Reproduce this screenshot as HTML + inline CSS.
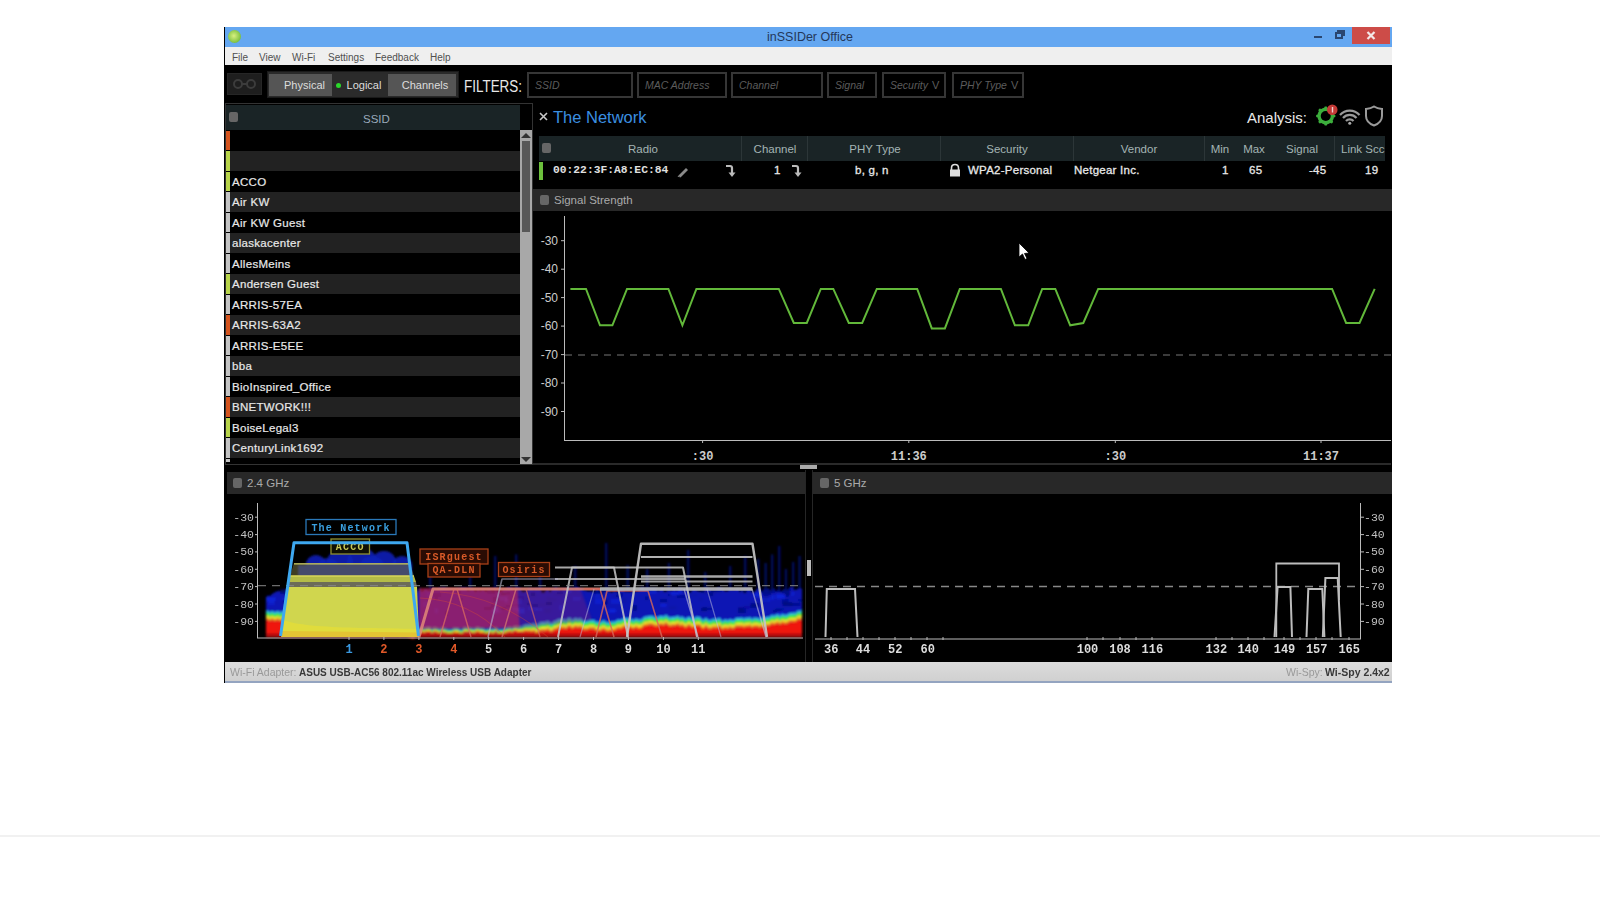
<!DOCTYPE html><html><head><meta charset="utf-8"><style>
*{margin:0;padding:0;box-sizing:border-box}
html,body{width:1600px;height:900px;overflow:hidden;background:#fff;font-family:"Liberation Sans",sans-serif}
.a{position:absolute;white-space:nowrap}
#hr{left:0;top:835px;width:1600px;height:2px;background:#f1f1f1}
#win{left:224px;top:27px;width:1168px;height:656px;background:#000}
#title{left:225px;top:27px;width:1167px;height:20px;background:#64a7f1}
#menu{left:225px;top:47px;width:1167px;height:18px;background:#efefef}
.mi{top:52px;font-size:10px;line-height:12px;color:#505050}
#status{left:225px;top:662px;width:1167px;height:21px;background:#d2d2d2;border-bottom:1px solid #9fb2cc}
.btn{height:22px;top:74px;font-size:11px;line-height:22px;color:#ddd;text-align:center}
.flt{top:72px;height:26px;border:2px solid #363636;font-size:10.5px;line-height:23px;color:#5c5c5c;font-style:italic;padding-left:6px}
.chev{font-style:normal;font-size:11px;margin-left:4px;color:#5c5c5c}
.row{left:226px;width:294px;height:20.5px}
.bar{left:226px;width:4px}
.rt{left:232px;font-size:11.5px;letter-spacing:0.3px;-webkit-text-stroke:0.2px #e8e8e8;color:#e8e8e8;line-height:14px}
.th{top:136px;height:25px;background:#1a2426;font-size:11.5px;color:#bcc;line-height:25px;text-align:center}
.td{top:163px;font-size:11px;color:#e8e8e8;line-height:14px}
.mono{font-family:"Liberation Mono",monospace}
.yl{font-family:"Liberation Mono",monospace;font-size:11.5px;color:#ccc;line-height:12px}
.gh{height:22px;background:#282828;font-size:11.5px;color:#aaa;line-height:22px}
.sq{display:inline-block;width:9px;height:10px;background:#666;border-radius:2px;vertical-align:-1px;margin-right:5px}
</style></head><body>
<div class="a" id="hr"></div>
<div class="a" id="win"></div>
<div class="a" id="title"></div>
<div class="a" style="left:228px;top:30px;width:13px;height:13px;border-radius:50%;background:radial-gradient(circle at 45% 45%,#d8f080,#7cc040 70%,#5aa030)"></div>
<span class="a" style="left:767px;top:30px;font-size:12.5px;line-height:14px;color:#24385a">inSSIDer Office</span>
<div class="a" style="left:1314px;top:36px;width:8px;height:2px;background:#2a4670"></div>
<div class="a" style="left:1335px;top:32px;width:8px;height:7px;border:2px solid #2a4670"></div>
<div class="a" style="left:1337px;top:30px;width:8px;height:6px;border-top:2px solid #2a4670;border-right:2px solid #2a4670"></div>
<div class="a" style="left:1352px;top:27px;width:38px;height:17px;background:#cd4c48"></div>
<svg class="a" style="left:1366px;top:31px" width="10" height="9"><path d="M1.5 1 L8.5 8 M8.5 1 L1.5 8" stroke="#f4e8e8" stroke-width="2.2"/></svg>
<div class="a" id="menu"></div>
<span class="a mi" style="left:232px">File</span>
<span class="a mi" style="left:259px">View</span>
<span class="a mi" style="left:292px">Wi-Fi</span>
<span class="a mi" style="left:328px">Settings</span>
<span class="a mi" style="left:375px">Feedback</span>
<span class="a mi" style="left:430px">Help</span>
<div class="a" style="left:227px;top:73px;width:35px;height:22px;background:#1e1e1e;border:1px solid #262626"></div>
<svg class="a" style="left:231px;top:78px" width="28" height="12"><circle cx="7" cy="6" r="4" fill="none" stroke="#3c3c3c" stroke-width="2"/><circle cx="20" cy="6" r="4" fill="none" stroke="#3c3c3c" stroke-width="2"/><path d="M11 6 H16" stroke="#3c3c3c" stroke-width="2"/></svg>
<div class="a" style="left:267px;top:71px;width:192px;height:27px;background:#2a2a2a;border:1px solid #1a1a1a"></div>
<div class="a btn" style="left:269px;width:63px;background:#555;padding-left:8px">Physical</div>
<div class="a btn" style="left:332px;width:56px;background:#2b2b2b;padding-left:8px">Logical</div>
<div class="a" style="left:336px;top:83px;width:5px;height:5px;background:#2ad82a;border-radius:50%"></div>
<div class="a btn" style="left:388px;width:68px;background:#555;padding-left:6px">Channels</div>
<span class="a" style="left:464px;top:78px;font-size:16px;line-height:18px;color:#e8e8e8;transform:scaleX(0.84);transform-origin:0 0">FILTERS:</span>
<div class="a flt" style="left:527px;width:106px">SSID</div>
<div class="a flt" style="left:637px;width:90px">MAC Address</div>
<div class="a flt" style="left:731px;width:92px">Channel</div>
<div class="a flt" style="left:827px;width:50px">Signal</div>
<div class="a flt" style="left:882px;width:64px">Security<span class="chev">V</span></div>
<div class="a flt" style="left:952px;width:72px">PHY Type<span class="chev">V</span></div>
<div class="a" style="left:225px;top:103px;width:308px;height:362px;border:1px solid #333"></div>
<div class="a" style="left:226px;top:105px;width:294px;height:25px;background:#1a2426"></div>
<div class="a sq" style="left:229px;top:112px"></div>
<span class="a" style="left:363px;top:112px;font-size:11.5px;line-height:14px;color:#9ab">SSID</span>
<div class="a row" style="top:130.50px;height:20.48px;background:#000"></div>
<div class="a bar" style="top:131.00px;height:19.48px;background:#d4541e"></div>
<div class="a row" style="top:150.98px;height:20.48px;background:#222"></div>
<div class="a bar" style="top:151.48px;height:19.48px;background:#b8d44a"></div>
<div class="a row" style="top:171.46px;height:20.48px;background:#000"></div>
<div class="a bar" style="top:171.96px;height:19.48px;background:#b8d44a"></div>
<span class="a rt" style="top:174.96px">ACCO</span>
<div class="a row" style="top:191.94px;height:20.48px;background:#222"></div>
<div class="a bar" style="top:192.44px;height:19.48px;background:#c4c4c4"></div>
<span class="a rt" style="top:195.44px">Air KW</span>
<div class="a row" style="top:212.42px;height:20.48px;background:#000"></div>
<div class="a bar" style="top:212.92px;height:19.48px;background:#c4c4c4"></div>
<span class="a rt" style="top:215.92px">Air KW Guest</span>
<div class="a row" style="top:232.90px;height:20.48px;background:#222"></div>
<div class="a bar" style="top:233.40px;height:19.48px;background:#c4c4c4"></div>
<span class="a rt" style="top:236.40px">alaskacenter</span>
<div class="a row" style="top:253.38px;height:20.48px;background:#000"></div>
<div class="a bar" style="top:253.88px;height:19.48px;background:#c4c4c4"></div>
<span class="a rt" style="top:256.88px">AllesMeins</span>
<div class="a row" style="top:273.86px;height:20.48px;background:#222"></div>
<div class="a bar" style="top:274.36px;height:19.48px;background:#b8d44a"></div>
<span class="a rt" style="top:277.36px">Andersen Guest</span>
<div class="a row" style="top:294.34px;height:20.48px;background:#000"></div>
<div class="a bar" style="top:294.84px;height:19.48px;background:#c4c4c4"></div>
<span class="a rt" style="top:297.84px">ARRIS-57EA</span>
<div class="a row" style="top:314.82px;height:20.48px;background:#222"></div>
<div class="a bar" style="top:315.32px;height:19.48px;background:#d4541e"></div>
<span class="a rt" style="top:318.32px">ARRIS-63A2</span>
<div class="a row" style="top:335.30px;height:20.48px;background:#000"></div>
<div class="a bar" style="top:335.80px;height:19.48px;background:#c4c4c4"></div>
<span class="a rt" style="top:338.80px">ARRIS-E5EE</span>
<div class="a row" style="top:355.78px;height:20.48px;background:#222"></div>
<div class="a bar" style="top:356.28px;height:19.48px;background:#c4c4c4"></div>
<span class="a rt" style="top:359.28px">bba</span>
<div class="a row" style="top:376.26px;height:20.48px;background:#000"></div>
<div class="a bar" style="top:376.76px;height:19.48px;background:#c4c4c4"></div>
<span class="a rt" style="top:379.76px">BioInspired_Office</span>
<div class="a row" style="top:396.74px;height:20.48px;background:#222"></div>
<div class="a bar" style="top:397.24px;height:19.48px;background:#d4541e"></div>
<span class="a rt" style="top:400.24px">BNETWORK!!!</span>
<div class="a row" style="top:417.22px;height:20.48px;background:#000"></div>
<div class="a bar" style="top:417.72px;height:19.48px;background:#b8d44a"></div>
<span class="a rt" style="top:420.72px">BoiseLegal3</span>
<div class="a row" style="top:437.70px;height:20.48px;background:#222"></div>
<div class="a bar" style="top:438.20px;height:19.48px;background:#c4c4c4"></div>
<span class="a rt" style="top:441.20px">CenturyLink1692</span>
<div class="a row" style="top:458.18px;height:4.82px;background:#000"></div>
<div class="a bar" style="top:458.68px;height:3.82px;background:#c4c4c4"></div>
<div class="a" style="left:520px;top:130px;width:12px;height:334px;background:#a8a8a8"></div>
<div class="a" style="left:522px;top:141px;width:8px;height:91px;background:#585858"></div>
<div class="a" style="left:521px;top:133px;width:0;height:0;border-left:5px solid transparent;border-right:5px solid transparent;border-bottom:5px solid #333"></div>
<div class="a" style="left:521px;top:457px;width:0;height:0;border-left:5px solid transparent;border-right:5px solid transparent;border-top:5px solid #333"></div>
<svg class="a" style="left:539px;top:112px" width="9" height="9"><path d="M1 1 L8 8 M8 1 L1 8" stroke="#c8c8c8" stroke-width="1.6"/></svg>
<span class="a" style="left:553px;top:108px;font-size:16.5px;line-height:19px;color:#3b8fe0">The Network</span>
<span class="a" style="left:1247px;top:108px;font-size:15px;line-height:19px;color:#e8e8e8">Analysis:</span>
<svg class="a" style="left:1312px;top:103px" width="76" height="26" viewBox="0 0 76 26"><polygon points="23.35,13.00 23.30,13.94 21.89,14.62 21.69,15.41 21.42,16.18 21.07,16.91 20.65,17.61 21.17,19.09 20.54,19.79 19.84,20.42 18.36,19.90 17.66,20.32 16.93,20.67 16.16,20.94 15.37,21.14 14.69,22.55 13.75,22.60 12.81,22.55 12.13,21.14 11.34,20.94 10.57,20.67 9.84,20.32 9.14,19.90 7.66,20.42 6.96,19.79 6.33,19.09 6.85,17.61 6.43,16.91 6.08,16.18 5.81,15.41 5.61,14.62 4.20,13.94 4.15,13.00 4.20,12.06 5.61,11.38 5.81,10.59 6.08,9.82 6.43,9.09 6.85,8.39 6.33,6.91 6.96,6.21 7.66,5.58 9.14,6.10 9.84,5.68 10.57,5.33 11.34,5.06 12.13,4.86 12.81,3.45 13.75,3.40 14.69,3.45 15.37,4.86 16.16,5.06 16.93,5.33 17.66,5.68 18.36,6.10 19.84,5.58 20.54,6.21 21.17,6.91 20.65,8.39 21.07,9.09 21.42,9.82 21.69,10.59 21.89,11.38 23.30,12.06" fill="#3cae3c"/><circle cx="13.75" cy="13" r="5" fill="#000"/><circle cx="20.25" cy="6.75" r="5.3" fill="#c43a36"/><path d="M20.5 4 V9.5" stroke="#f0d0d0" stroke-width="1.4"/><path d="M28 12 A13 13 0 0 1 47.5 12" fill="none" stroke="#9a9a9a" stroke-width="2.2"/><path d="M31 15 A9 9 0 0 1 44.5 15" fill="none" stroke="#9a9a9a" stroke-width="2.2"/><path d="M34 18 A5 5 0 0 1 41.5 18" fill="none" stroke="#9a9a9a" stroke-width="2.2"/><circle cx="37.75" cy="20.3" r="1.5" fill="#aaa"/><path d="M54 6 Q59 5.5 62 3.5 Q65 5.5 70 6 V13 Q70 19.5 62 22.5 Q54 19.5 54 13 Z" fill="none" stroke="#9a9a9a" stroke-width="2"/></svg>
<div class="a" style="left:539px;top:136px;width:846px;height:25px;background:#1a2426"></div>
<div class="a sq" style="left:542px;top:143px"></div>
<div class="a" style="left:741px;top:136px;width:1px;height:25px;background:#2c3638"></div>
<div class="a" style="left:807px;top:136px;width:1px;height:25px;background:#2c3638"></div>
<div class="a" style="left:940px;top:136px;width:1px;height:25px;background:#2c3638"></div>
<div class="a" style="left:1073px;top:136px;width:1px;height:25px;background:#2c3638"></div>
<div class="a" style="left:1204px;top:136px;width:1px;height:25px;background:#2c3638"></div>
<div class="a" style="left:1334px;top:136px;width:1px;height:25px;background:#2c3638"></div>
<span class="a" style="left:583px;width:120px;top:142px;font-size:11.5px;line-height:14px;color:#a4b4b4;text-align:center">Radio</span>
<span class="a" style="left:715px;width:120px;top:142px;font-size:11.5px;line-height:14px;color:#a4b4b4;text-align:center">Channel</span>
<span class="a" style="left:815px;width:120px;top:142px;font-size:11.5px;line-height:14px;color:#a4b4b4;text-align:center">PHY Type</span>
<span class="a" style="left:947px;width:120px;top:142px;font-size:11.5px;line-height:14px;color:#a4b4b4;text-align:center">Security</span>
<span class="a" style="left:1079px;width:120px;top:142px;font-size:11.5px;line-height:14px;color:#a4b4b4;text-align:center">Vendor</span>
<span class="a" style="left:1160px;width:120px;top:142px;font-size:11.5px;line-height:14px;color:#a4b4b4;text-align:center">Min</span>
<span class="a" style="left:1194px;width:120px;top:142px;font-size:11.5px;line-height:14px;color:#a4b4b4;text-align:center">Max</span>
<span class="a" style="left:1242px;width:120px;top:142px;font-size:11.5px;line-height:14px;color:#a4b4b4;text-align:center">Signal</span>
<span class="a" style="left:1341px;top:142px;font-size:11.5px;line-height:14px;color:#a4b4b4">Link Scc</span>
<div class="a" style="left:539px;top:162px;width:4px;height:18px;background:#6cc03c"></div>
<span class="a mono" style="left:553px;top:163px;font-size:11.3px;line-height:14px;color:#e0e0e0;font-weight:bold">00:22:3F:A8:EC:84</span>
<svg class="a" style="left:676px;top:164px" width="14" height="14"><path d="M2.5 11.5 L10 4 L12 6 L4.5 13.5 Z" fill="#8a8a8a"/><path d="M1.5 12.5 L2.5 11.5 L4.5 13.5 Z" fill="#8a8a8a"/></svg>
<svg class="a" style="left:724px;top:163px" width="14" height="16"><path d="M2 3 H6 Q8 3 8 5 V10" fill="none" stroke="#bbb" stroke-width="2.2"/><path d="M4.5 9.5 L8 14 L11.5 9.5 Z" fill="#bbb"/></svg>
<span class="a" style="left:774px;top:163px;font-size:11.5px;line-height:14px;color:#e8e8e8;letter-spacing:0.25px;-webkit-text-stroke:0.3px #e8e8e8">1</span>
<svg class="a" style="left:790px;top:163px" width="14" height="16"><path d="M2 3 H6 Q8 3 8 5 V10" fill="none" stroke="#bbb" stroke-width="2.2"/><path d="M4.5 9.5 L8 14 L11.5 9.5 Z" fill="#bbb"/></svg>
<span class="a" style="left:855px;top:163px;font-size:11.5px;line-height:14px;color:#e8e8e8;letter-spacing:0.25px;-webkit-text-stroke:0.3px #e8e8e8">b, g, n</span>
<svg class="a" style="left:948px;top:163px" width="14" height="14"><path d="M3.5 7 V5 Q3.5 1.5 7 1.5 Q10.5 1.5 10.5 5 V7" fill="none" stroke="#ddd" stroke-width="1.6"/><rect x="2" y="6.5" width="10" height="7" fill="#ddd"/></svg>
<span class="a" style="left:968px;top:163px;font-size:11.5px;line-height:14px;color:#e8e8e8;letter-spacing:0.25px;-webkit-text-stroke:0.3px #e8e8e8">WPA2-Personal</span>
<span class="a" style="left:1074px;top:163px;font-size:11.5px;line-height:14px;color:#e8e8e8;letter-spacing:0.25px;-webkit-text-stroke:0.3px #e8e8e8">Netgear Inc.</span>
<span class="a" style="left:1222px;top:163px;font-size:11.5px;line-height:14px;color:#e8e8e8;letter-spacing:0.25px;-webkit-text-stroke:0.3px #e8e8e8">1</span>
<span class="a" style="left:1249px;top:163px;font-size:11.5px;line-height:14px;color:#e8e8e8;letter-spacing:0.25px;-webkit-text-stroke:0.3px #e8e8e8">65</span>
<span class="a" style="left:1309px;top:163px;font-size:11.5px;line-height:14px;color:#e8e8e8;letter-spacing:0.25px;-webkit-text-stroke:0.3px #e8e8e8">-45</span>
<span class="a" style="left:1365px;top:163px;font-size:11.5px;line-height:14px;color:#e8e8e8;letter-spacing:0.25px;-webkit-text-stroke:0.3px #e8e8e8">19</span>
<div class="a gh" style="left:533px;top:189px;width:859px;padding-left:7px"><span class="sq"></span>Signal Strength</div>
<svg class="a" style="left:533px;top:211px" width="859" height="254" viewBox="533 211 859 254"><line x1="564.5" y1="216" x2="564.5" y2="440.5" stroke="#bbb" stroke-width="1"/><line x1="564" y1="440.5" x2="1391" y2="440.5" stroke="#bbb" stroke-width="1"/><line x1="533" y1="464" x2="1391" y2="464" stroke="#555" stroke-width="1"/><line x1="561" y1="240.7" x2="565" y2="240.7" stroke="#bbb"/><text x="558" y="244.7" text-anchor="end" font-family="Liberation Sans" font-size="12" fill="#ccc">-30</text><line x1="561" y1="269.2" x2="565" y2="269.2" stroke="#bbb"/><text x="558" y="273.2" text-anchor="end" font-family="Liberation Sans" font-size="12" fill="#ccc">-40</text><line x1="561" y1="297.6" x2="565" y2="297.6" stroke="#bbb"/><text x="558" y="301.6" text-anchor="end" font-family="Liberation Sans" font-size="12" fill="#ccc">-50</text><line x1="561" y1="326.1" x2="565" y2="326.1" stroke="#bbb"/><text x="558" y="330.1" text-anchor="end" font-family="Liberation Sans" font-size="12" fill="#ccc">-60</text><line x1="561" y1="354.6" x2="565" y2="354.6" stroke="#bbb"/><text x="558" y="358.6" text-anchor="end" font-family="Liberation Sans" font-size="12" fill="#ccc">-70</text><line x1="561" y1="383.0" x2="565" y2="383.0" stroke="#bbb"/><text x="558" y="387.0" text-anchor="end" font-family="Liberation Sans" font-size="12" fill="#ccc">-80</text><line x1="561" y1="411.5" x2="565" y2="411.5" stroke="#bbb"/><text x="558" y="415.5" text-anchor="end" font-family="Liberation Sans" font-size="12" fill="#ccc">-90</text><line x1="565" y1="355" x2="1391" y2="355" stroke="#777" stroke-width="1.2" stroke-dasharray="7 6"/><polyline fill="none" stroke="#62b83a" stroke-width="2" points="570.4,288.9 586.0,288.9 600.0,325.3 612.4,325.3 627.0,288.9 668.4,288.9 682.4,325.3 696.4,288.9 778.8,288.9 793.8,323.0 806.8,323.0 820.8,288.9 833.3,288.9 848.8,323.0 862.2,323.0 876.8,288.9 917.2,288.9 931.8,328.4 944.9,328.4 959.8,288.9 1000.9,288.9 1014.9,325.3 1028.2,325.3 1042.2,288.9 1055.3,288.9 1070.2,325.3 1083.3,323.0 1098.2,288.9 1332.1,288.9 1346.1,323.0 1359.5,323.0 1374.7,288.9"/><line x1="702.6" y1="440" x2="702.6" y2="443" stroke="#bbb"/><text x="702.6" y="460" text-anchor="middle" font-family="Liberation Mono" font-weight="bold" font-size="12" fill="#ccc">:30</text><line x1="908.8" y1="440" x2="908.8" y2="443" stroke="#bbb"/><text x="908.8" y="460" text-anchor="middle" font-family="Liberation Mono" font-weight="bold" font-size="12" fill="#ccc">11:36</text><line x1="1115.3" y1="440" x2="1115.3" y2="443" stroke="#bbb"/><text x="1115.3" y="460" text-anchor="middle" font-family="Liberation Mono" font-weight="bold" font-size="12" fill="#ccc">:30</text><line x1="1321" y1="440" x2="1321" y2="443" stroke="#bbb"/><text x="1321" y="460" text-anchor="middle" font-family="Liberation Mono" font-weight="bold" font-size="12" fill="#ccc">11:37</text><path d="M1019 243 L1019 257 L1022.5 254 L1025 259.5 L1027 258.5 L1024.5 253.5 L1029 253 Z" fill="#fff" stroke="#000" stroke-width="0.8"/></svg>
<div class="a" style="left:800px;top:465px;width:17px;height:4px;background:#aaa"></div>
<div class="a gh" style="left:227px;top:472px;width:578px;padding-left:6px"><span class="sq"></span>2.4 GHz</div>
<div class="a" style="left:805px;top:470px;width:8px;height:192px;background:#000;border-left:1px solid #262626;border-right:1px solid #262626"></div>
<div class="a" style="left:807px;top:560px;width:4px;height:16px;background:#bbb"></div>
<div class="a gh" style="left:813px;top:472px;width:579px;padding-left:7px"><span class="sq"></span>5 GHz</div>
<svg class="a" style="left:225px;top:493px" width="580" height="169" viewBox="225 493 580 169"><defs><filter id="bl" x="-5%" y="-5%" width="110%" height="110%"><feGaussianBlur stdDeviation="0.9"/></filter><filter id="bl2"><feGaussianBlur stdDeviation="0.5"/></filter></defs><g filter="url(#bl)"><polygon fill="#0a16b4" points="266,597.1 268,595.4 270,596.0 272,594.1 274,592.8 276,591.8 278,591.1 280,591.2 282,592.3 284,592.7 286,588.6 288,590.4 290,592.7 292,592.0 294,587.8 296,587.7 298,589.7 300,587.4 302,588.4 304,587.4 306,591.0 308,591.7 310,592.4 312,587.9 314,591.3 316,591.0 318,587.9 320,592.3 322,592.8 324,588.3 326,592.7 328,589.4 330,589.9 332,592.9 334,592.0 336,588.0 338,589.6 340,590.1 342,589.0 344,588.2 346,588.9 348,591.3 350,587.1 352,590.3 354,589.6 356,587.1 358,589.0 360,590.7 362,590.1 364,587.4 366,592.9 368,591.7 370,592.8 372,587.6 374,588.6 376,587.2 378,591.7 380,588.6 382,587.8 384,589.5 386,592.5 388,591.9 390,588.6 392,587.9 394,592.5 396,590.4 398,591.2 400,587.5 402,587.3 404,591.1 406,589.6 408,587.4 410,592.6 412,590.8 414,591.8 416,587.5 418,592.1 420,587.4 422,592.2 424,589.7 426,589.0 428,590.3 430,592.6 432,588.6 434,587.8 436,590.2 438,588.4 440,587.7 442,588.0 444,587.3 446,588.2 448,588.9 450,588.8 452,591.6 454,588.7 456,590.0 458,588.1 460,589.1 462,587.1 464,588.5 466,587.1 468,591.4 470,590.3 472,588.1 474,589.8 476,592.6 478,587.6 480,591.9 482,589.6 484,590.0 486,592.0 488,589.4 490,590.0 492,591.1 494,592.9 496,589.1 498,592.0 500,591.2 502,590.8 504,589.4 506,589.1 508,587.3 510,587.8 512,587.4 514,591.4 516,588.5 518,588.0 520,587.5 522,592.0 524,592.2 526,591.0 528,588.7 530,588.5 532,588.8 534,589.8 536,587.9 538,589.7 540,588.6 542,592.8 544,592.8 546,590.3 548,588.5 550,592.8 552,588.9 554,589.1 556,587.0 558,589.3 560,589.8 562,590.0 564,588.2 566,590.0 568,587.0 570,588.6 572,587.5 574,589.4 576,587.3 578,587.1 580,588.8 582,588.4 584,590.5 586,590.2 588,591.5 590,590.9 592,591.3 594,592.3 596,589.3 598,589.0 600,592.9 602,587.9 604,591.3 606,590.9 608,587.3 610,592.0 612,592.4 614,590.8 616,591.4 618,591.9 620,587.8 622,590.1 624,590.0 626,592.0 628,591.8 630,592.0 632,590.5 634,592.4 636,591.1 638,591.2 640,588.4 642,587.2 644,587.8 646,589.2 648,587.6 650,592.0 652,590.4 654,590.8 656,590.8 658,591.1 660,589.9 662,587.0 664,591.8 666,591.5 668,590.0 670,590.2 672,591.0 674,587.4 676,591.4 678,588.5 680,587.4 682,588.6 684,591.4 686,588.2 688,591.4 690,592.9 692,590.0 694,589.3 696,589.9 698,591.1 700,591.6 702,590.7 704,590.9 706,587.5 708,587.9 710,588.5 712,591.5 714,588.8 716,590.4 718,587.1 720,587.4 722,588.6 724,591.0 726,591.2 728,591.1 730,588.7 732,590.1 734,589.8 736,589.8 738,587.7 740,592.4 742,588.2 744,592.9 746,592.6 748,587.1 750,589.8 752,591.9 754,592.8 756,589.7 758,588.6 760,588.3 762,592.7 764,588.3 766,590.5 768,587.9 770,590.1 772,592.7 774,587.8 776,591.9 778,590.1 780,592.3 782,591.2 784,588.4 786,592.4 788,589.9 790,587.1 792,587.0 794,590.0 796,589.7 798,588.8 800,587.8 802,589.1 802,637.0 266,637.0"/><rect x="434.8" y="608.2" width="3.0" height="5.0" fill="#1830f0" opacity="0.55"/><rect x="330.1" y="610.2" width="8.0" height="5.6" fill="#0810a0" opacity="0.55"/><rect x="401.2" y="589.6" width="5.7" height="5.5" fill="#000c80" opacity="0.55"/><rect x="458.6" y="598.3" width="4.9" height="2.2" fill="#000c80" opacity="0.55"/><rect x="293.6" y="603.9" width="7.4" height="2.6" fill="#0810a0" opacity="0.55"/><rect x="499.0" y="595.6" width="8.4" height="5.1" fill="#1830f0" opacity="0.55"/><rect x="738.2" y="607.5" width="7.4" height="5.7" fill="#000060" opacity="0.55"/><rect x="559.3" y="605.3" width="3.3" height="4.9" fill="#1830f0" opacity="0.55"/><rect x="594.4" y="591.3" width="9.1" height="3.9" fill="#000060" opacity="0.55"/><rect x="334.0" y="599.3" width="5.4" height="3.2" fill="#000870" opacity="0.55"/><rect x="660.5" y="603.7" width="5.8" height="3.0" fill="#1830f0" opacity="0.55"/><rect x="563.6" y="597.5" width="4.2" height="2.6" fill="#1428e0" opacity="0.55"/><rect x="533.3" y="607.5" width="6.9" height="3.8" fill="#0810a0" opacity="0.55"/><rect x="798.1" y="598.8" width="4.0" height="2.8" fill="#000c80" opacity="0.55"/><rect x="359.3" y="601.3" width="5.2" height="3.5" fill="#000060" opacity="0.55"/><rect x="373.9" y="588.5" width="9.1" height="3.5" fill="#000870" opacity="0.55"/><rect x="545.9" y="597.0" width="5.4" height="2.2" fill="#0810a0" opacity="0.55"/><rect x="572.7" y="596.6" width="7.8" height="4.1" fill="#1428e0" opacity="0.55"/><rect x="315.4" y="609.5" width="5.7" height="4.6" fill="#1830f0" opacity="0.55"/><rect x="775.4" y="608.4" width="9.1" height="2.1" fill="#000c80" opacity="0.55"/><rect x="493.1" y="606.3" width="8.6" height="5.9" fill="#1830f0" opacity="0.55"/><rect x="266.1" y="597.4" width="9.5" height="5.3" fill="#1830f0" opacity="0.55"/><rect x="785.2" y="594.0" width="3.8" height="2.6" fill="#000060" opacity="0.55"/><rect x="785.0" y="590.6" width="8.8" height="4.8" fill="#1830f0" opacity="0.55"/><rect x="311.4" y="606.6" width="3.0" height="2.5" fill="#000060" opacity="0.55"/><rect x="757.2" y="603.5" width="5.1" height="2.5" fill="#0810a0" opacity="0.55"/><rect x="548.1" y="598.5" width="8.3" height="2.4" fill="#0810a0" opacity="0.55"/><rect x="546.0" y="602.0" width="5.7" height="2.9" fill="#000060" opacity="0.55"/><rect x="266.6" y="600.9" width="10.0" height="3.1" fill="#0810a0" opacity="0.55"/><rect x="610.2" y="609.2" width="6.3" height="2.9" fill="#1428e0" opacity="0.55"/><rect x="281.6" y="597.9" width="7.5" height="2.2" fill="#1428e0" opacity="0.55"/><rect x="532.1" y="604.2" width="5.9" height="3.0" fill="#000870" opacity="0.55"/><rect x="492.6" y="596.9" width="6.5" height="4.8" fill="#000870" opacity="0.55"/><rect x="490.6" y="604.4" width="4.4" height="5.2" fill="#000870" opacity="0.55"/><rect x="717.3" y="589.6" width="6.5" height="2.8" fill="#1428e0" opacity="0.55"/><rect x="389.3" y="593.3" width="8.3" height="3.2" fill="#000060" opacity="0.55"/><rect x="530.7" y="592.5" width="4.6" height="3.7" fill="#000870" opacity="0.55"/><rect x="296.1" y="602.3" width="9.5" height="2.2" fill="#000c80" opacity="0.55"/><rect x="786.2" y="591.4" width="3.4" height="2.2" fill="#1830f0" opacity="0.55"/><rect x="506.1" y="605.1" width="5.2" height="2.5" fill="#000c80" opacity="0.55"/><rect x="763.5" y="595.9" width="4.3" height="5.7" fill="#000870" opacity="0.55"/><rect x="515.7" y="595.5" width="8.1" height="5.4" fill="#0810a0" opacity="0.55"/><rect x="502.3" y="590.6" width="3.5" height="2.3" fill="#1830f0" opacity="0.55"/><rect x="776.2" y="591.0" width="9.7" height="2.8" fill="#0810a0" opacity="0.55"/><rect x="676.5" y="595.4" width="8.6" height="2.4" fill="#000870" opacity="0.55"/><rect x="518.8" y="596.9" width="9.4" height="2.8" fill="#0810a0" opacity="0.55"/><rect x="659.7" y="599.4" width="7.4" height="3.0" fill="#000870" opacity="0.55"/><rect x="675.4" y="589.0" width="3.2" height="2.3" fill="#000c80" opacity="0.55"/><rect x="403.2" y="605.9" width="9.3" height="3.4" fill="#0810a0" opacity="0.55"/><rect x="444.9" y="610.9" width="3.3" height="5.0" fill="#000870" opacity="0.55"/><rect x="435.0" y="594.6" width="3.0" height="5.0" fill="#000870" opacity="0.55"/><rect x="771.4" y="589.6" width="8.8" height="2.4" fill="#000870" opacity="0.55"/><rect x="776.9" y="610.9" width="5.7" height="3.0" fill="#1830f0" opacity="0.55"/><rect x="701.1" y="591.2" width="6.5" height="2.0" fill="#000870" opacity="0.55"/><rect x="428.0" y="604.6" width="4.1" height="2.9" fill="#0810a0" opacity="0.55"/><rect x="512.1" y="606.8" width="7.2" height="4.0" fill="#1830f0" opacity="0.55"/><rect x="668.0" y="593.9" width="3.5" height="2.1" fill="#000060" opacity="0.55"/><rect x="556.8" y="591.9" width="6.0" height="2.4" fill="#000c80" opacity="0.55"/><rect x="407.5" y="590.0" width="3.7" height="4.0" fill="#000870" opacity="0.55"/><rect x="785.1" y="592.2" width="3.9" height="3.8" fill="#000870" opacity="0.55"/><rect x="391.5" y="600.9" width="8.4" height="5.0" fill="#0810a0" opacity="0.55"/><rect x="422.9" y="601.6" width="5.6" height="5.0" fill="#1428e0" opacity="0.55"/><rect x="500.6" y="592.5" width="4.6" height="3.1" fill="#000060" opacity="0.55"/><rect x="366.5" y="589.6" width="4.8" height="3.0" fill="#000060" opacity="0.55"/><rect x="389.6" y="607.4" width="7.6" height="6.0" fill="#000c80" opacity="0.55"/><rect x="268.4" y="609.2" width="4.6" height="3.8" fill="#0810a0" opacity="0.55"/><rect x="287.6" y="595.0" width="3.8" height="2.8" fill="#000060" opacity="0.55"/><rect x="369.7" y="589.8" width="6.6" height="2.7" fill="#000060" opacity="0.55"/><rect x="404.8" y="606.7" width="9.6" height="2.4" fill="#000060" opacity="0.55"/><rect x="645.0" y="596.4" width="3.3" height="3.4" fill="#000c80" opacity="0.55"/><rect x="374.9" y="594.1" width="7.2" height="4.6" fill="#1428e0" opacity="0.55"/><rect x="701.1" y="607.7" width="5.9" height="3.5" fill="#000060" opacity="0.55"/><rect x="432.7" y="592.9" width="8.6" height="4.2" fill="#000c80" opacity="0.55"/><rect x="484.0" y="607.1" width="7.6" height="2.6" fill="#000060" opacity="0.55"/><rect x="314.7" y="591.9" width="7.9" height="3.6" fill="#0810a0" opacity="0.55"/><rect x="622.6" y="598.0" width="3.4" height="5.0" fill="#0810a0" opacity="0.55"/><rect x="487.1" y="588.4" width="8.4" height="5.2" fill="#000870" opacity="0.55"/><rect x="371.3" y="605.5" width="4.4" height="2.0" fill="#1428e0" opacity="0.55"/><rect x="492.3" y="607.7" width="5.8" height="5.5" fill="#1830f0" opacity="0.55"/><rect x="678.8" y="591.1" width="3.4" height="2.6" fill="#1830f0" opacity="0.55"/><rect x="313.5" y="602.9" width="5.6" height="4.0" fill="#1428e0" opacity="0.55"/><rect x="451.8" y="591.9" width="4.2" height="2.3" fill="#1830f0" opacity="0.55"/><rect x="527.9" y="607.3" width="9.8" height="2.8" fill="#1428e0" opacity="0.55"/><rect x="713.1" y="589.0" width="9.4" height="3.3" fill="#000060" opacity="0.55"/><rect x="760.6" y="597.3" width="9.3" height="4.5" fill="#1428e0" opacity="0.55"/><rect x="607.9" y="608.6" width="7.3" height="4.5" fill="#1428e0" opacity="0.55"/><rect x="708.8" y="592.4" width="4.5" height="3.6" fill="#000060" opacity="0.55"/><rect x="349.6" y="596.6" width="4.0" height="5.9" fill="#1428e0" opacity="0.55"/><rect x="287.9" y="601.5" width="8.3" height="2.2" fill="#0810a0" opacity="0.55"/><rect x="328.9" y="602.4" width="6.9" height="4.5" fill="#0810a0" opacity="0.55"/><rect x="612.6" y="595.4" width="4.7" height="3.6" fill="#0810a0" opacity="0.55"/><rect x="504.6" y="598.5" width="3.2" height="4.5" fill="#1830f0" opacity="0.55"/><rect x="514.5" y="598.7" width="7.3" height="5.3" fill="#1428e0" opacity="0.55"/><rect x="698.8" y="597.6" width="3.5" height="3.4" fill="#0810a0" opacity="0.55"/><rect x="315.0" y="598.6" width="6.6" height="2.2" fill="#000870" opacity="0.55"/><rect x="335.6" y="610.1" width="5.2" height="4.9" fill="#000c80" opacity="0.55"/><rect x="295.0" y="600.1" width="5.6" height="5.8" fill="#1428e0" opacity="0.55"/><rect x="279.8" y="589.6" width="7.3" height="4.8" fill="#000c80" opacity="0.55"/><rect x="369.4" y="611.6" width="6.4" height="5.8" fill="#1428e0" opacity="0.55"/><rect x="632.4" y="605.3" width="4.5" height="5.3" fill="#000060" opacity="0.55"/><rect x="669.8" y="591.8" width="9.3" height="3.1" fill="#1830f0" opacity="0.55"/><rect x="342.7" y="600.1" width="9.4" height="2.8" fill="#0810a0" opacity="0.55"/><rect x="594.9" y="593.7" width="5.6" height="2.8" fill="#1830f0" opacity="0.55"/><rect x="352.1" y="610.5" width="7.8" height="5.6" fill="#1428e0" opacity="0.55"/><rect x="689.0" y="594.3" width="8.4" height="2.2" fill="#0810a0" opacity="0.55"/><rect x="781.9" y="598.9" width="6.7" height="4.8" fill="#000c80" opacity="0.55"/><rect x="400.6" y="600.9" width="9.0" height="5.0" fill="#0810a0" opacity="0.55"/><rect x="407.4" y="611.8" width="7.0" height="3.4" fill="#000c80" opacity="0.55"/><rect x="502.2" y="592.2" width="8.2" height="2.2" fill="#000060" opacity="0.55"/><rect x="401.5" y="603.3" width="9.9" height="4.3" fill="#000870" opacity="0.55"/><rect x="744.3" y="605.6" width="8.2" height="2.9" fill="#0810a0" opacity="0.55"/><rect x="595.0" y="598.4" width="6.6" height="5.6" fill="#1428e0" opacity="0.55"/><rect x="526.8" y="602.7" width="3.3" height="2.2" fill="#000060" opacity="0.55"/><rect x="455.6" y="590.6" width="5.5" height="2.9" fill="#000060" opacity="0.55"/><rect x="426.8" y="591.2" width="5.6" height="5.3" fill="#1428e0" opacity="0.55"/><rect x="338.0" y="610.5" width="4.7" height="2.6" fill="#000c80" opacity="0.55"/><rect x="300.0" y="591.5" width="7.7" height="3.1" fill="#0810a0" opacity="0.55"/><rect x="782.5" y="589.3" width="8.7" height="5.6" fill="#000060" opacity="0.55"/><rect x="610.8" y="598.7" width="9.6" height="4.9" fill="#1428e0" opacity="0.55"/><rect x="354.2" y="588.0" width="3.4" height="2.1" fill="#1428e0" opacity="0.55"/><rect x="392.9" y="589.4" width="8.5" height="2.0" fill="#000060" opacity="0.55"/><rect x="616.7" y="592.7" width="5.9" height="4.1" fill="#000870" opacity="0.55"/><rect x="536.7" y="603.4" width="8.7" height="2.7" fill="#0810a0" opacity="0.55"/><rect x="300.1" y="603.0" width="10.0" height="4.9" fill="#1830f0" opacity="0.55"/><rect x="648.0" y="588.2" width="8.9" height="5.0" fill="#1830f0" opacity="0.55"/><rect x="309.0" y="603.7" width="4.2" height="6.0" fill="#0810a0" opacity="0.55"/><rect x="390.0" y="588.9" width="5.3" height="5.0" fill="#000870" opacity="0.55"/><rect x="769.5" y="594.3" width="3.4" height="4.5" fill="#000870" opacity="0.55"/><rect x="498.9" y="606.9" width="6.7" height="3.1" fill="#000870" opacity="0.55"/><rect x="761.9" y="609.5" width="3.6" height="4.0" fill="#1428e0" opacity="0.55"/><rect x="405.0" y="593.7" width="8.2" height="5.8" fill="#000870" opacity="0.55"/><rect x="754.6" y="592.6" width="5.7" height="4.4" fill="#1830f0" opacity="0.55"/><rect x="750.6" y="603.1" width="7.8" height="4.7" fill="#000060" opacity="0.55"/><rect x="516.7" y="608.2" width="7.9" height="5.4" fill="#1830f0" opacity="0.55"/><rect x="776.3" y="593.6" width="9.2" height="5.2" fill="#1830f0" opacity="0.55"/><rect x="598.5" y="589.9" width="9.4" height="2.6" fill="#000c80" opacity="0.55"/><rect x="325.8" y="602.9" width="4.1" height="5.9" fill="#000870" opacity="0.55"/><rect x="281.3" y="589.0" width="7.8" height="4.5" fill="#000870" opacity="0.55"/><rect x="302.2" y="589.1" width="9.0" height="5.0" fill="#1428e0" opacity="0.55"/><rect x="702.6" y="607.7" width="9.2" height="2.3" fill="#000870" opacity="0.55"/><rect x="770.3" y="590.6" width="4.4" height="2.4" fill="#000c80" opacity="0.55"/><rect x="772.9" y="609.9" width="8.3" height="2.3" fill="#000870" opacity="0.55"/><rect x="603.6" y="599.5" width="3.9" height="5.2" fill="#000870" opacity="0.55"/><rect x="375.5" y="595.7" width="6.0" height="2.1" fill="#0810a0" opacity="0.55"/><rect x="762.7" y="589.2" width="8.3" height="5.6" fill="#000060" opacity="0.55"/><rect x="535.0" y="608.4" width="7.3" height="2.1" fill="#1830f0" opacity="0.55"/><rect x="282.7" y="600.4" width="3.7" height="3.9" fill="#000c80" opacity="0.55"/><rect x="553.2" y="593.2" width="9.0" height="2.4" fill="#0810a0" opacity="0.55"/><rect x="357.0" y="588.0" width="4.4" height="5.0" fill="#000c80" opacity="0.55"/><rect x="268.3" y="599.8" width="6.4" height="5.2" fill="#1428e0" opacity="0.55"/><rect x="782.5" y="602.2" width="9.7" height="4.1" fill="#000060" opacity="0.55"/><rect x="770.0" y="594.8" width="4.5" height="4.8" fill="#1830f0" opacity="0.55"/><rect x="354.5" y="610.5" width="8.4" height="4.0" fill="#000870" opacity="0.55"/><rect x="565.7" y="590.5" width="5.3" height="2.4" fill="#1830f0" opacity="0.55"/><rect x="742.2" y="605.9" width="6.0" height="4.6" fill="#0810a0" opacity="0.55"/><rect x="376.1" y="594.3" width="9.3" height="4.0" fill="#1830f0" opacity="0.55"/><rect x="790.6" y="603.1" width="9.6" height="2.5" fill="#000060" opacity="0.55"/><rect x="668.9" y="606.1" width="7.5" height="3.4" fill="#0810a0" opacity="0.55"/><rect x="544.6" y="608.8" width="6.2" height="4.2" fill="#0810a0" opacity="0.55"/><rect x="356.5" y="598.5" width="8.4" height="4.3" fill="#1428e0" opacity="0.55"/><ellipse cx="316" cy="564" rx="10" ry="9" fill="#1020b8" opacity="0.9"/><ellipse cx="340" cy="562" rx="13" ry="12" fill="#1020b8" opacity="0.9"/><ellipse cx="362" cy="562" rx="15" ry="14" fill="#1020b8" opacity="0.9"/><ellipse cx="384" cy="562" rx="12" ry="11" fill="#1020b8" opacity="0.9"/><ellipse cx="402" cy="565" rx="10" ry="9" fill="#1020b8" opacity="0.9"/><ellipse cx="328" cy="568" rx="11" ry="10" fill="#1020b8" opacity="0.9"/><ellipse cx="372" cy="568" rx="13" ry="12" fill="#1020b8" opacity="0.9"/><rect x="298" y="565" width="114" height="26" fill="#1020b8"/><rect x="605.0" y="543" width="2.4" height="49.0" fill="#0a14a0" opacity="0.6"/><rect x="626.5" y="565" width="2.4" height="27.0" fill="#0a14a0" opacity="0.6"/><rect x="646.0" y="569" width="2.4" height="23.0" fill="#0a14a0" opacity="0.6"/><rect x="667.7" y="563" width="2.4" height="29.0" fill="#0a14a0" opacity="0.6"/><rect x="687.0" y="550" width="2.4" height="42.0" fill="#0a14a0" opacity="0.6"/><rect x="744.0" y="556" width="2.4" height="36.0" fill="#0a14a0" opacity="0.6"/><rect x="757.0" y="559" width="2.4" height="33.0" fill="#0a14a0" opacity="0.6"/><rect x="764.5" y="563" width="2.4" height="29.0" fill="#0a14a0" opacity="0.6"/><rect x="771.0" y="554.5" width="2.4" height="37.5" fill="#0a14a0" opacity="0.6"/><rect x="778.0" y="546" width="2.4" height="46.0" fill="#0a14a0" opacity="0.6"/><rect x="784.7" y="569" width="2.4" height="23.0" fill="#0a14a0" opacity="0.6"/><rect x="792.0" y="562" width="2.4" height="30.0" fill="#0a14a0" opacity="0.6"/><rect x="798.4" y="556" width="2.4" height="36.0" fill="#0a14a0" opacity="0.6"/><rect x="494.0" y="556" width="2.4" height="36.0" fill="#0a14a0" opacity="0.6"/><rect x="515.0" y="554.5" width="2.4" height="37.5" fill="#0a14a0" opacity="0.6"/><rect x="574.0" y="566" width="2.4" height="26.0" fill="#0a14a0" opacity="0.6"/><rect x="539.0" y="572" width="2.4" height="20.0" fill="#0a14a0" opacity="0.6"/><rect x="469.0" y="574" width="2.4" height="18.0" fill="#0a14a0" opacity="0.6"/><rect x="429.0" y="576" width="2.4" height="16.0" fill="#0a14a0" opacity="0.6"/><rect x="704.0" y="572" width="2.4" height="20.0" fill="#0a14a0" opacity="0.6"/><rect x="729.0" y="566" width="2.4" height="26.0" fill="#0a14a0" opacity="0.6"/><polygon fill="#30b8e8" opacity="1" points="266,610.9 268,610.5 270,612.2 272,610.5 274,612.1 276,611.7 278,610.8 280,612.4 282,611.0 284,612.5 286,611.6 288,611.9 290,613.1 292,614.7 294,612.6 296,613.2 298,614.7 300,615.9 302,615.0 304,614.6 306,616.7 308,614.0 310,616.8 312,615.2 314,615.0 316,615.2 318,616.0 320,617.9 322,616.1 324,617.6 326,618.0 328,617.4 330,618.2 332,616.9 334,617.1 336,617.8 338,619.5 340,619.0 342,618.8 344,620.0 346,619.8 348,619.5 350,621.3 352,621.3 354,620.0 356,621.3 358,621.4 360,622.8 362,622.5 364,621.4 366,623.8 368,621.3 370,622.5 372,623.8 374,622.1 376,623.4 378,622.2 380,624.5 382,625.0 384,624.6 386,625.8 388,624.3 390,625.7 392,625.6 394,625.8 396,625.7 398,627.1 400,627.7 402,626.4 404,627.3 406,625.6 408,627.9 410,627.9 412,629.3 414,628.9 416,627.5 418,628.0 420,628.8 422,626.7 424,628.2 426,627.2 428,627.0 430,626.9 432,629.1 434,627.1 436,627.5 438,627.9 440,629.5 442,626.9 444,628.1 446,628.4 448,629.5 450,629.3 452,629.4 454,627.6 456,628.0 458,627.8 460,629.5 462,629.7 464,627.2 466,627.2 468,627.4 470,627.4 472,628.2 474,628.6 476,627.5 478,626.7 480,628.0 482,627.9 484,628.5 486,629.7 488,628.9 490,628.3 492,628.7 494,628.8 496,626.8 498,629.6 500,629.2 502,629.4 504,629.0 506,627.6 508,627.6 510,626.5 512,628.1 514,626.2 516,626.1 518,626.5 520,626.2 522,626.4 524,625.1 526,624.5 528,624.6 530,624.1 532,624.5 534,623.0 536,625.3 538,624.1 540,622.2 542,622.1 544,622.0 546,621.8 548,620.7 550,622.8 552,623.0 554,621.0 556,620.8 558,619.2 560,619.0 562,619.5 564,619.0 566,620.5 568,618.1 570,617.4 572,620.1 574,618.7 576,617.7 578,619.2 580,617.8 582,619.6 584,621.3 586,621.1 588,620.8 590,619.6 592,620.2 594,619.8 596,621.9 598,621.4 600,622.4 602,620.8 604,620.3 606,622.0 608,622.4 610,621.9 612,621.6 614,621.4 616,621.0 618,619.2 620,620.0 622,619.3 624,618.1 626,618.0 628,618.6 630,618.3 632,619.4 634,620.1 636,618.2 638,619.6 640,619.5 642,619.2 644,617.1 646,616.4 648,616.2 650,615.9 652,615.7 654,616.8 656,617.4 658,617.0 660,615.7 662,616.0 664,616.6 666,614.4 668,616.4 670,617.4 672,617.1 674,617.1 676,616.4 678,615.6 680,617.7 682,616.3 684,618.0 686,618.7 688,617.0 690,617.1 692,619.0 694,618.4 696,616.8 698,616.8 700,617.0 702,619.6 704,619.4 706,617.4 708,619.7 710,620.3 712,619.5 714,618.6 716,619.4 718,618.2 720,617.9 722,620.9 724,619.8 726,619.3 728,620.5 730,618.8 732,620.1 734,619.9 736,617.8 738,617.9 740,617.9 742,617.6 744,618.7 746,617.5 748,617.9 750,616.9 752,619.3 754,617.5 756,617.7 758,618.0 760,618.9 762,617.3 764,618.7 766,617.1 768,616.9 770,616.6 772,614.7 774,615.8 776,614.7 778,613.9 780,616.1 782,613.9 784,614.6 786,615.0 788,614.0 790,612.8 792,612.9 794,612.6 796,612.8 798,610.2 800,611.2 802,609.7 802,611.7 800,613.2 798,612.2 796,614.8 794,614.6 792,614.9 790,614.8 788,616.0 786,617.0 784,616.6 782,615.9 780,618.1 778,615.9 776,616.7 774,617.8 772,616.7 770,618.6 768,618.9 766,619.1 764,620.7 762,619.3 760,620.9 758,620.0 756,619.7 754,619.5 752,621.3 750,618.9 748,619.9 746,619.5 744,620.7 742,619.6 740,619.9 738,619.9 736,619.8 734,621.9 732,622.1 730,620.8 728,622.5 726,621.3 724,621.8 722,622.9 720,619.9 718,620.2 716,621.4 714,620.6 712,621.5 710,622.3 708,621.7 706,619.4 704,621.4 702,621.6 700,619.0 698,618.8 696,618.8 694,620.4 692,621.0 690,619.1 688,619.0 686,620.7 684,620.0 682,618.3 680,619.7 678,617.6 676,618.4 674,619.1 672,619.1 670,619.4 668,618.4 666,616.4 664,618.6 662,618.0 660,617.7 658,619.0 656,619.4 654,618.8 652,617.7 650,617.9 648,618.2 646,618.4 644,619.1 642,621.2 640,621.5 638,621.6 636,620.2 634,622.1 632,621.4 630,620.3 628,620.6 626,620.0 624,620.1 622,621.3 620,622.0 618,621.2 616,623.0 614,623.4 612,623.6 610,623.9 608,624.4 606,624.0 604,622.3 602,622.8 600,624.4 598,623.4 596,623.9 594,621.8 592,622.2 590,621.6 588,622.8 586,623.1 584,623.3 582,621.6 580,619.8 578,621.2 576,619.7 574,620.7 572,622.1 570,619.4 568,620.1 566,622.5 564,621.0 562,621.5 560,621.0 558,621.2 556,622.8 554,623.0 552,625.0 550,624.8 548,622.7 546,623.8 544,624.0 542,624.1 540,624.2 538,626.0 536,627.2 534,624.8 532,626.2 530,625.7 528,626.2 526,626.0 524,626.5 522,627.8 520,627.5 518,627.7 516,627.2 514,627.3 512,629.2 510,627.6 508,628.7 506,628.7 504,630.1 502,630.5 500,630.3 498,630.7 496,627.9 494,629.9 492,629.8 490,629.4 488,630.0 486,630.8 484,629.6 482,629.0 480,629.1 478,627.8 476,628.6 474,629.7 472,629.3 470,628.5 468,628.5 466,628.3 464,628.3 462,630.8 460,630.6 458,628.9 456,629.1 454,628.7 452,630.5 450,630.4 448,630.6 446,629.5 444,629.2 442,628.0 440,630.6 438,629.0 436,628.6 434,628.2 432,630.2 430,628.0 428,628.1 426,628.3 424,629.3 422,627.8 420,629.9 418,630.0 416,629.5 414,630.9 412,631.3 410,629.9 408,629.9 406,627.6 404,629.3 402,628.4 400,629.7 398,629.1 396,627.7 394,627.8 392,627.6 390,627.7 388,626.3 386,627.8 384,626.6 382,627.0 380,626.5 378,624.2 376,625.4 374,624.1 372,625.8 370,624.5 368,623.3 366,625.8 364,623.4 362,624.5 360,624.8 358,623.4 356,623.3 354,622.0 352,623.3 350,623.3 348,621.5 346,621.8 344,622.0 342,620.8 340,621.0 338,621.5 336,619.8 334,619.1 332,618.9 330,620.2 328,619.4 326,620.0 324,619.6 322,618.1 320,619.9 318,618.0 316,617.2 314,617.0 312,617.2 310,618.8 308,616.0 306,618.7 304,616.6 302,617.0 300,617.9 298,616.7 296,615.2 294,614.6 292,616.7 290,615.1 288,613.9 286,613.6 284,614.5 282,613.0 280,614.4 278,612.8 276,613.7 274,614.1 272,612.5 270,614.2 268,612.5 266,612.9"/><polygon fill="#40f040" opacity="1" points="266,612.9 268,612.5 270,614.2 272,612.5 274,614.1 276,613.7 278,612.8 280,614.4 282,613.0 284,614.5 286,613.6 288,613.9 290,615.1 292,616.7 294,614.6 296,615.2 298,616.7 300,617.9 302,617.0 304,616.6 306,618.7 308,616.0 310,618.8 312,617.2 314,617.0 316,617.2 318,618.0 320,619.9 322,618.1 324,619.6 326,620.0 328,619.4 330,620.2 332,618.9 334,619.1 336,619.8 338,621.5 340,621.0 342,620.8 344,622.0 346,621.8 348,621.5 350,623.3 352,623.3 354,622.0 356,623.3 358,623.4 360,624.8 362,624.5 364,623.4 366,625.8 368,623.3 370,624.5 372,625.8 374,624.1 376,625.4 378,624.2 380,626.5 382,627.0 384,626.6 386,627.8 388,626.3 390,627.7 392,627.6 394,627.8 396,627.7 398,629.1 400,629.7 402,628.4 404,629.3 406,627.6 408,629.9 410,629.9 412,631.3 414,630.9 416,629.5 418,630.0 420,629.9 422,627.8 424,629.3 426,628.3 428,628.1 430,628.0 432,630.2 434,628.2 436,628.6 438,629.0 440,630.6 442,628.0 444,629.2 446,629.5 448,630.6 450,630.4 452,630.5 454,628.7 456,629.1 458,628.9 460,630.6 462,630.8 464,628.3 466,628.3 468,628.5 470,628.5 472,629.3 474,629.7 476,628.6 478,627.8 480,629.1 482,629.0 484,629.6 486,630.8 488,630.0 490,629.4 492,629.8 494,629.9 496,627.9 498,630.7 500,630.3 502,630.5 504,630.1 506,628.7 508,628.7 510,627.6 512,629.2 514,627.3 516,627.2 518,627.7 520,627.5 522,627.8 524,626.5 526,626.0 528,626.2 530,625.7 532,626.2 534,624.8 536,627.2 538,626.0 540,624.2 542,624.1 544,624.0 546,623.8 548,622.7 550,624.8 552,625.0 554,623.0 556,622.8 558,621.2 560,621.0 562,621.5 564,621.0 566,622.5 568,620.1 570,619.4 572,622.1 574,620.7 576,619.7 578,621.2 580,619.8 582,621.6 584,623.3 586,623.1 588,622.8 590,621.6 592,622.2 594,621.8 596,623.9 598,623.4 600,624.4 602,622.8 604,622.3 606,624.0 608,624.4 610,623.9 612,623.6 614,623.4 616,623.0 618,621.2 620,622.0 622,621.3 624,620.1 626,620.0 628,620.6 630,620.3 632,621.4 634,622.1 636,620.2 638,621.6 640,621.5 642,621.2 644,619.1 646,618.4 648,618.2 650,617.9 652,617.7 654,618.8 656,619.4 658,619.0 660,617.7 662,618.0 664,618.6 666,616.4 668,618.4 670,619.4 672,619.1 674,619.1 676,618.4 678,617.6 680,619.7 682,618.3 684,620.0 686,620.7 688,619.0 690,619.1 692,621.0 694,620.4 696,618.8 698,618.8 700,619.0 702,621.6 704,621.4 706,619.4 708,621.7 710,622.3 712,621.5 714,620.6 716,621.4 718,620.2 720,619.9 722,622.9 724,621.8 726,621.3 728,622.5 730,620.8 732,622.1 734,621.9 736,619.8 738,619.9 740,619.9 742,619.6 744,620.7 746,619.5 748,619.9 750,618.9 752,621.3 754,619.5 756,619.7 758,620.0 760,620.9 762,619.3 764,620.7 766,619.1 768,618.9 770,618.6 772,616.7 774,617.8 776,616.7 778,615.9 780,618.1 782,615.9 784,616.6 786,617.0 788,616.0 790,614.8 792,614.9 794,614.6 796,614.8 798,612.2 800,613.2 802,611.7 802,614.7 800,616.2 798,615.2 796,617.8 794,617.6 792,617.9 790,617.8 788,619.0 786,620.0 784,619.6 782,618.9 780,621.1 778,618.9 776,619.7 774,620.8 772,619.7 770,621.6 768,621.9 766,622.1 764,623.7 762,622.3 760,623.9 758,623.0 756,622.7 754,622.5 752,624.3 750,621.9 748,622.9 746,622.5 744,623.7 742,622.6 740,622.9 738,622.9 736,622.8 734,624.9 732,625.1 730,623.8 728,625.5 726,624.3 724,624.8 722,625.9 720,622.9 718,623.2 716,624.4 714,623.6 712,624.5 710,625.3 708,624.7 706,622.4 704,624.4 702,624.6 700,622.0 698,621.8 696,621.8 694,623.4 692,624.0 690,622.1 688,622.0 686,623.7 684,623.0 682,621.3 680,622.7 678,620.6 676,621.4 674,622.1 672,622.1 670,622.4 668,621.4 666,619.4 664,621.6 662,621.0 660,620.7 658,622.0 656,622.4 654,621.8 652,620.7 650,620.9 648,621.2 646,621.4 644,622.1 642,624.2 640,624.5 638,624.6 636,623.2 634,625.1 632,624.4 630,623.3 628,623.6 626,623.0 624,623.1 622,624.3 620,625.0 618,624.2 616,626.0 614,626.4 612,626.6 610,626.9 608,627.4 606,627.0 604,625.3 602,625.8 600,627.4 598,626.4 596,626.9 594,624.8 592,625.2 590,624.6 588,625.8 586,626.1 584,626.3 582,624.6 580,622.8 578,624.2 576,622.7 574,623.7 572,625.1 570,622.4 568,623.1 566,625.5 564,624.0 562,624.5 560,624.0 558,624.2 556,625.8 554,626.0 552,628.0 550,627.8 548,625.7 546,626.8 544,627.0 542,627.1 540,627.2 538,628.9 536,630.0 534,627.5 532,628.8 530,628.2 528,628.5 526,628.3 524,628.7 522,629.8 520,629.4 518,629.5 516,628.9 514,628.9 512,630.9 510,629.3 508,630.3 506,630.4 504,631.8 502,632.1 500,631.9 498,632.3 496,629.6 494,631.6 492,631.4 490,631.1 488,631.6 486,632.5 484,631.2 482,630.6 480,630.8 478,629.4 476,630.3 474,631.3 472,631.0 470,630.2 468,630.2 466,630.0 464,629.9 462,632.5 460,632.3 458,630.6 456,630.8 454,630.3 452,632.2 450,632.0 448,632.3 446,631.2 444,630.9 442,629.7 440,632.2 438,630.7 436,630.2 434,629.8 432,631.9 430,629.6 428,629.8 426,630.0 424,630.9 422,629.5 420,631.6 418,633.0 416,632.5 414,633.9 412,634.3 410,632.9 408,632.9 406,630.6 404,632.3 402,631.4 400,632.7 398,632.1 396,630.7 394,630.8 392,630.6 390,630.7 388,629.3 386,630.8 384,629.6 382,630.0 380,629.5 378,627.2 376,628.4 374,627.1 372,628.8 370,627.5 368,626.3 366,628.8 364,626.4 362,627.5 360,627.8 358,626.4 356,626.3 354,625.0 352,626.3 350,626.3 348,624.5 346,624.8 344,625.0 342,623.8 340,624.0 338,624.5 336,622.8 334,622.1 332,621.9 330,623.2 328,622.4 326,623.0 324,622.6 322,621.1 320,622.9 318,621.0 316,620.2 314,620.0 312,620.2 310,621.8 308,619.0 306,621.7 304,619.6 302,620.0 300,620.9 298,619.7 296,618.2 294,617.6 292,619.7 290,618.1 288,616.9 286,616.6 284,617.5 282,616.0 280,617.4 278,615.8 276,616.7 274,617.1 272,615.5 270,617.2 268,615.5 266,615.9"/><polygon fill="#f0e820" opacity="1" points="266,615.9 268,615.5 270,617.2 272,615.5 274,617.1 276,616.7 278,615.8 280,617.4 282,616.0 284,617.5 286,616.6 288,616.9 290,618.1 292,619.7 294,617.6 296,618.2 298,619.7 300,620.9 302,620.0 304,619.6 306,621.7 308,619.0 310,621.8 312,620.2 314,620.0 316,620.2 318,621.0 320,622.9 322,621.1 324,622.6 326,623.0 328,622.4 330,623.2 332,621.9 334,622.1 336,622.8 338,624.5 340,624.0 342,623.8 344,625.0 346,624.8 348,624.5 350,626.3 352,626.3 354,625.0 356,626.3 358,626.4 360,627.8 362,627.5 364,626.4 366,628.8 368,626.3 370,627.5 372,628.8 374,627.1 376,628.4 378,627.2 380,629.5 382,630.0 384,629.6 386,630.8 388,629.3 390,630.7 392,630.6 394,630.8 396,630.7 398,632.1 400,632.7 402,631.4 404,632.3 406,630.6 408,632.9 410,632.9 412,634.3 414,633.9 416,632.5 418,633.0 420,631.6 422,629.5 424,630.9 426,630.0 428,629.8 430,629.6 432,631.9 434,629.8 436,630.2 438,630.7 440,632.2 442,629.7 444,630.9 446,631.2 448,632.3 450,632.0 452,632.2 454,630.3 456,630.8 458,630.6 460,632.3 462,632.5 464,629.9 466,630.0 468,630.2 470,630.2 472,631.0 474,631.3 476,630.3 478,629.4 480,630.8 482,630.6 484,631.2 486,632.5 488,631.6 490,631.1 492,631.4 494,631.6 496,629.6 498,632.3 500,631.9 502,632.1 504,631.8 506,630.4 508,630.3 510,629.3 512,630.9 514,628.9 516,628.9 518,629.5 520,629.4 522,629.8 524,628.7 526,628.3 528,628.5 530,628.2 532,628.8 534,627.5 536,630.0 538,628.9 540,627.2 542,627.1 544,627.0 546,626.8 548,625.7 550,627.8 552,628.0 554,626.0 556,625.8 558,624.2 560,624.0 562,624.5 564,624.0 566,625.5 568,623.1 570,622.4 572,625.1 574,623.7 576,622.7 578,624.2 580,622.8 582,624.6 584,626.3 586,626.1 588,625.8 590,624.6 592,625.2 594,624.8 596,626.9 598,626.4 600,627.4 602,625.8 604,625.3 606,627.0 608,627.4 610,626.9 612,626.6 614,626.4 616,626.0 618,624.2 620,625.0 622,624.3 624,623.1 626,623.0 628,623.6 630,623.3 632,624.4 634,625.1 636,623.2 638,624.6 640,624.5 642,624.2 644,622.1 646,621.4 648,621.2 650,620.9 652,620.7 654,621.8 656,622.4 658,622.0 660,620.7 662,621.0 664,621.6 666,619.4 668,621.4 670,622.4 672,622.1 674,622.1 676,621.4 678,620.6 680,622.7 682,621.3 684,623.0 686,623.7 688,622.0 690,622.1 692,624.0 694,623.4 696,621.8 698,621.8 700,622.0 702,624.6 704,624.4 706,622.4 708,624.7 710,625.3 712,624.5 714,623.6 716,624.4 718,623.2 720,622.9 722,625.9 724,624.8 726,624.3 728,625.5 730,623.8 732,625.1 734,624.9 736,622.8 738,622.9 740,622.9 742,622.6 744,623.7 746,622.5 748,622.9 750,621.9 752,624.3 754,622.5 756,622.7 758,623.0 760,623.9 762,622.3 764,623.7 766,622.1 768,621.9 770,621.6 772,619.7 774,620.8 776,619.7 778,618.9 780,621.1 782,618.9 784,619.6 786,620.0 788,619.0 790,617.8 792,617.9 794,617.6 796,617.8 798,615.2 800,616.2 802,614.7 802,617.2 800,618.7 798,617.7 796,620.3 794,620.1 792,620.4 790,620.3 788,621.5 786,622.5 784,622.1 782,621.4 780,623.6 778,621.4 776,622.2 774,623.3 772,622.2 770,624.1 768,624.4 766,624.6 764,626.2 762,624.8 760,626.4 758,625.5 756,625.2 754,625.0 752,626.8 750,624.4 748,625.4 746,625.0 744,626.2 742,625.1 740,625.4 738,625.4 736,625.3 734,627.4 732,627.6 730,626.3 728,628.0 726,626.8 724,627.3 722,628.4 720,625.4 718,625.7 716,626.9 714,626.1 712,627.0 710,627.8 708,627.2 706,624.9 704,626.9 702,627.1 700,624.5 698,624.3 696,624.3 694,625.9 692,626.5 690,624.6 688,624.5 686,626.2 684,625.5 682,623.8 680,625.2 678,623.1 676,623.9 674,624.6 672,624.6 670,624.9 668,623.9 666,621.9 664,624.1 662,623.5 660,623.2 658,624.5 656,624.9 654,624.3 652,623.2 650,623.4 648,623.7 646,623.9 644,624.6 642,626.7 640,627.0 638,627.1 636,625.7 634,627.6 632,626.9 630,625.8 628,626.1 626,625.5 624,625.6 622,626.8 620,627.5 618,626.7 616,628.5 614,628.9 612,629.1 610,629.4 608,629.9 606,629.5 604,627.8 602,628.3 600,629.9 598,628.9 596,629.4 594,627.3 592,627.7 590,627.1 588,628.3 586,628.6 584,628.8 582,627.1 580,625.3 578,626.7 576,625.2 574,626.2 572,627.6 570,624.9 568,625.6 566,628.0 564,626.5 562,627.0 560,626.5 558,626.7 556,628.3 554,628.5 552,630.5 550,630.3 548,628.2 546,629.3 544,629.5 542,629.6 540,629.7 538,631.3 536,632.3 534,629.7 532,630.9 530,630.2 528,630.5 526,630.1 524,630.4 522,631.5 520,631.0 518,631.0 516,630.4 514,630.3 512,632.2 510,630.6 508,631.7 506,631.8 504,633.2 502,633.5 500,633.3 498,633.7 496,631.0 494,633.0 492,632.8 490,632.4 488,633.0 486,633.8 484,632.6 482,632.0 480,632.1 478,630.8 476,631.6 474,632.7 472,632.4 470,631.5 468,631.5 466,631.4 464,631.3 462,633.9 460,633.6 458,631.9 456,632.1 454,631.7 452,633.6 450,633.4 448,633.6 446,632.6 444,632.2 442,631.1 440,633.6 438,632.1 436,631.6 434,631.2 432,633.3 430,631.0 428,631.2 426,631.3 424,632.3 422,630.9 420,632.9 418,635.5 416,635.0 414,636.4 412,636.8 410,635.4 408,635.4 406,633.1 404,634.8 402,633.9 400,635.2 398,634.6 396,633.2 394,633.3 392,633.1 390,633.2 388,631.8 386,633.3 384,632.1 382,632.5 380,632.0 378,629.7 376,630.9 374,629.6 372,631.3 370,630.0 368,628.8 366,631.3 364,628.9 362,630.0 360,630.3 358,628.9 356,628.8 354,627.5 352,628.8 350,628.8 348,627.0 346,627.3 344,627.5 342,626.3 340,626.5 338,627.0 336,625.3 334,624.6 332,624.4 330,625.7 328,624.9 326,625.5 324,625.1 322,623.6 320,625.4 318,623.5 316,622.7 314,622.5 312,622.7 310,624.3 308,621.5 306,624.2 304,622.1 302,622.5 300,623.4 298,622.2 296,620.7 294,620.1 292,622.2 290,620.6 288,619.4 286,619.1 284,620.0 282,618.5 280,619.9 278,618.3 276,619.2 274,619.6 272,618.0 270,619.7 268,618.0 266,618.4"/><polygon fill="#ff8010" opacity="1" points="266,618.4 268,618.0 270,619.7 272,618.0 274,619.6 276,619.2 278,618.3 280,619.9 282,618.5 284,620.0 286,619.1 288,619.4 290,620.6 292,622.2 294,620.1 296,620.7 298,622.2 300,623.4 302,622.5 304,622.1 306,624.2 308,621.5 310,624.3 312,622.7 314,622.5 316,622.7 318,623.5 320,625.4 322,623.6 324,625.1 326,625.5 328,624.9 330,625.7 332,624.4 334,624.6 336,625.3 338,627.0 340,626.5 342,626.3 344,627.5 346,627.3 348,627.0 350,628.8 352,628.8 354,627.5 356,628.8 358,628.9 360,630.3 362,630.0 364,628.9 366,631.3 368,628.8 370,630.0 372,631.3 374,629.6 376,630.9 378,629.7 380,632.0 382,632.5 384,632.1 386,633.3 388,631.8 390,633.2 392,633.1 394,633.3 396,633.2 398,634.6 400,635.2 402,633.9 404,634.8 406,633.1 408,635.4 410,635.4 412,636.8 414,636.4 416,635.0 418,635.5 420,632.9 422,630.9 424,632.3 426,631.3 428,631.2 430,631.0 432,633.3 434,631.2 436,631.6 438,632.1 440,633.6 442,631.1 444,632.2 446,632.6 448,633.6 450,633.4 452,633.6 454,631.7 456,632.1 458,631.9 460,633.6 462,633.9 464,631.3 466,631.4 468,631.5 470,631.5 472,632.4 474,632.7 476,631.6 478,630.8 480,632.1 482,632.0 484,632.6 486,633.8 488,633.0 490,632.4 492,632.8 494,633.0 496,631.0 498,633.7 500,633.3 502,633.5 504,633.2 506,631.8 508,631.7 510,630.6 512,632.2 514,630.3 516,630.4 518,631.0 520,631.0 522,631.5 524,630.4 526,630.1 528,630.5 530,630.2 532,630.9 534,629.7 536,632.3 538,631.3 540,629.7 542,629.6 544,629.5 546,629.3 548,628.2 550,630.3 552,630.5 554,628.5 556,628.3 558,626.7 560,626.5 562,627.0 564,626.5 566,628.0 568,625.6 570,624.9 572,627.6 574,626.2 576,625.2 578,626.7 580,625.3 582,627.1 584,628.8 586,628.6 588,628.3 590,627.1 592,627.7 594,627.3 596,629.4 598,628.9 600,629.9 602,628.3 604,627.8 606,629.5 608,629.9 610,629.4 612,629.1 614,628.9 616,628.5 618,626.7 620,627.5 622,626.8 624,625.6 626,625.5 628,626.1 630,625.8 632,626.9 634,627.6 636,625.7 638,627.1 640,627.0 642,626.7 644,624.6 646,623.9 648,623.7 650,623.4 652,623.2 654,624.3 656,624.9 658,624.5 660,623.2 662,623.5 664,624.1 666,621.9 668,623.9 670,624.9 672,624.6 674,624.6 676,623.9 678,623.1 680,625.2 682,623.8 684,625.5 686,626.2 688,624.5 690,624.6 692,626.5 694,625.9 696,624.3 698,624.3 700,624.5 702,627.1 704,626.9 706,624.9 708,627.2 710,627.8 712,627.0 714,626.1 716,626.9 718,625.7 720,625.4 722,628.4 724,627.3 726,626.8 728,628.0 730,626.3 732,627.6 734,627.4 736,625.3 738,625.4 740,625.4 742,625.1 744,626.2 746,625.0 748,625.4 750,624.4 752,626.8 754,625.0 756,625.2 758,625.5 760,626.4 762,624.8 764,626.2 766,624.6 768,624.4 770,624.1 772,622.2 774,623.3 776,622.2 778,621.4 780,623.6 782,621.4 784,622.1 786,622.5 788,621.5 790,620.3 792,620.4 794,620.1 796,620.3 798,617.7 800,618.7 802,617.2 802,619.2 800,620.7 798,619.7 796,622.3 794,622.1 792,622.4 790,622.3 788,623.5 786,624.5 784,624.1 782,623.4 780,625.6 778,623.4 776,624.2 774,625.3 772,624.2 770,626.1 768,626.4 766,626.6 764,628.2 762,626.8 760,628.4 758,627.5 756,627.2 754,627.0 752,628.8 750,626.4 748,627.4 746,627.0 744,628.2 742,627.1 740,627.4 738,627.4 736,627.3 734,629.4 732,629.6 730,628.3 728,630.0 726,628.8 724,629.3 722,630.4 720,627.4 718,627.7 716,628.9 714,628.1 712,629.0 710,629.8 708,629.2 706,626.9 704,628.9 702,629.1 700,626.5 698,626.3 696,626.3 694,627.9 692,628.5 690,626.6 688,626.5 686,628.2 684,627.5 682,625.8 680,627.2 678,625.1 676,625.9 674,626.6 672,626.6 670,626.9 668,625.9 666,623.9 664,626.1 662,625.5 660,625.2 658,626.5 656,626.9 654,626.3 652,625.2 650,625.4 648,625.7 646,625.9 644,626.6 642,628.7 640,629.0 638,629.1 636,627.7 634,629.6 632,628.9 630,627.8 628,628.1 626,627.5 624,627.6 622,628.8 620,629.5 618,628.7 616,630.5 614,630.9 612,631.1 610,631.4 608,631.9 606,631.5 604,629.8 602,630.3 600,631.9 598,630.9 596,631.4 594,629.3 592,629.7 590,629.1 588,630.3 586,630.6 584,630.8 582,629.1 580,627.3 578,628.7 576,627.2 574,628.2 572,629.6 570,626.9 568,627.6 566,630.0 564,628.5 562,629.0 560,628.5 558,628.7 556,630.3 554,630.5 552,632.5 550,632.3 548,630.2 546,631.3 544,631.5 542,631.6 540,631.7 538,633.3 536,634.1 534,631.5 532,632.6 530,631.8 528,632.1 526,631.6 524,631.9 522,632.8 520,632.3 518,632.2 516,631.5 514,631.4 512,633.3 510,631.7 508,632.8 506,632.9 504,634.3 502,634.6 500,634.4 498,634.8 496,632.1 494,634.1 492,633.9 490,633.5 488,634.1 486,634.9 484,633.7 482,633.1 480,633.2 478,631.9 476,632.7 474,633.8 472,633.5 470,632.6 468,632.6 466,632.5 464,632.4 462,635.0 460,634.7 458,633.0 456,633.2 454,632.8 452,634.7 450,634.5 448,634.7 446,633.7 444,633.3 442,632.2 440,634.7 438,633.2 436,632.7 434,632.3 432,634.4 430,632.1 428,632.3 426,632.4 424,633.4 422,632.0 420,634.0 418,637.5 416,637.0 414,638.4 412,638.8 410,637.4 408,637.4 406,635.1 404,636.8 402,635.9 400,637.2 398,636.6 396,635.2 394,635.3 392,635.1 390,635.2 388,633.8 386,635.3 384,634.1 382,634.5 380,634.0 378,631.7 376,632.9 374,631.6 372,633.3 370,632.0 368,630.8 366,633.3 364,630.9 362,632.0 360,632.3 358,630.9 356,630.8 354,629.5 352,630.8 350,630.8 348,629.0 346,629.3 344,629.5 342,628.3 340,628.5 338,629.0 336,627.3 334,626.6 332,626.4 330,627.7 328,626.9 326,627.5 324,627.1 322,625.6 320,627.4 318,625.5 316,624.7 314,624.5 312,624.7 310,626.3 308,623.5 306,626.2 304,624.1 302,624.5 300,625.4 298,624.2 296,622.7 294,622.1 292,624.2 290,622.6 288,621.4 286,621.1 284,622.0 282,620.5 280,621.9 278,620.3 276,621.2 274,621.6 272,620.0 270,621.7 268,620.0 266,620.4"/><polygon fill="#f01408" points="266,620.4 268,620.0 270,621.7 272,620.0 274,621.6 276,621.2 278,620.3 280,621.9 282,620.5 284,622.0 286,621.1 288,621.4 290,622.6 292,624.2 294,622.1 296,622.7 298,624.2 300,625.4 302,624.5 304,624.1 306,626.2 308,623.5 310,626.3 312,624.7 314,624.5 316,624.7 318,625.5 320,627.4 322,625.6 324,627.1 326,627.5 328,626.9 330,627.7 332,626.4 334,626.6 336,627.3 338,629.0 340,628.5 342,628.3 344,629.5 346,629.3 348,629.0 350,630.8 352,630.8 354,629.5 356,630.8 358,630.9 360,632.3 362,632.0 364,630.9 366,633.3 368,630.8 370,632.0 372,633.3 374,631.6 376,632.9 378,631.7 380,634.0 382,634.5 384,634.1 386,635.3 388,633.8 390,635.2 392,635.1 394,635.3 396,635.2 398,636.6 400,637.2 402,635.9 404,636.8 406,635.1 408,637.4 410,637.4 412,638.8 414,638.4 416,637.0 418,637.5 420,634.0 422,632.0 424,633.4 426,632.4 428,632.3 430,632.1 432,634.4 434,632.3 436,632.7 438,633.2 440,634.7 442,632.2 444,633.3 446,633.7 448,634.7 450,634.5 452,634.7 454,632.8 456,633.2 458,633.0 460,634.7 462,635.0 464,632.4 466,632.5 468,632.6 470,632.6 472,633.5 474,633.8 476,632.7 478,631.9 480,633.2 482,633.1 484,633.7 486,634.9 488,634.1 490,633.5 492,633.9 494,634.1 496,632.1 498,634.8 500,634.4 502,634.6 504,634.3 506,632.9 508,632.8 510,631.7 512,633.3 514,631.4 516,631.5 518,632.2 520,632.3 522,632.8 524,631.9 526,631.6 528,632.1 530,631.8 532,632.6 534,631.5 536,634.1 538,633.3 540,631.7 542,631.6 544,631.5 546,631.3 548,630.2 550,632.3 552,632.5 554,630.5 556,630.3 558,628.7 560,628.5 562,629.0 564,628.5 566,630.0 568,627.6 570,626.9 572,629.6 574,628.2 576,627.2 578,628.7 580,627.3 582,629.1 584,630.8 586,630.6 588,630.3 590,629.1 592,629.7 594,629.3 596,631.4 598,630.9 600,631.9 602,630.3 604,629.8 606,631.5 608,631.9 610,631.4 612,631.1 614,630.9 616,630.5 618,628.7 620,629.5 622,628.8 624,627.6 626,627.5 628,628.1 630,627.8 632,628.9 634,629.6 636,627.7 638,629.1 640,629.0 642,628.7 644,626.6 646,625.9 648,625.7 650,625.4 652,625.2 654,626.3 656,626.9 658,626.5 660,625.2 662,625.5 664,626.1 666,623.9 668,625.9 670,626.9 672,626.6 674,626.6 676,625.9 678,625.1 680,627.2 682,625.8 684,627.5 686,628.2 688,626.5 690,626.6 692,628.5 694,627.9 696,626.3 698,626.3 700,626.5 702,629.1 704,628.9 706,626.9 708,629.2 710,629.8 712,629.0 714,628.1 716,628.9 718,627.7 720,627.4 722,630.4 724,629.3 726,628.8 728,630.0 730,628.3 732,629.6 734,629.4 736,627.3 738,627.4 740,627.4 742,627.1 744,628.2 746,627.0 748,627.4 750,626.4 752,628.8 754,627.0 756,627.2 758,627.5 760,628.4 762,626.8 764,628.2 766,626.6 768,626.4 770,626.1 772,624.2 774,625.3 776,624.2 778,623.4 780,625.6 782,623.4 784,624.1 786,624.5 788,623.5 790,622.3 792,622.4 794,622.1 796,622.3 798,619.7 800,620.7 802,619.2 802,637 266,637"/><rect x="266" y="633.5" width="536" height="4" fill="#b00c08"/></g><polygon fill="#d82848" opacity="0.62" filter="url(#bl)" points="419,588 518,588 520,628 419,629"/><polygon fill="#8a2070" opacity="0.35" filter="url(#bl)" points="518,588 580,588 592,620 520,628"/><polygon fill="#6a6838" opacity="0.6" points="294,563 410,563 414,576 290,576"/><polygon fill="#b4bc48" points="290,576 414,576 416,582 289,582"/><polygon fill="#6c6c58" points="289,582 416,582 417,587 288,587"/><polygon fill="#d0d64e" points="288,587 417,587 419,636 281,636"/><path fill="#e0dc3c" d="M283,620 C300,626 330,627 360,628 C390,628 410,629 419,629 L419,636 L281,636 Z"/><polygon fill="#e4c434" points="282,631 419,632.5 419,637 281,637"/><line x1="294" y1="563.8" x2="410" y2="563.8" stroke="#cccc60" stroke-width="1.2"/><line x1="290" y1="576" x2="414" y2="576" stroke="#d8d858" stroke-width="1.6"/><polyline fill="none" stroke="#e08878" stroke-width="3" opacity="0.85" stroke-linejoin="round" points="419,637 433,589 600,589"/><polyline fill="none" stroke="#d86858" stroke-width="1.6" opacity="0.8" stroke-linejoin="round" points="584,589 600,589 614,637"/><polyline fill="none" stroke="#d86858" stroke-width="1.6" opacity="0.8" stroke-linejoin="round" points="596,637 607,591 648,591 662,637"/><polyline fill="none" stroke="#e07060" stroke-width="1.4" opacity="0.7" stroke-linejoin="round" points="440,637 454,589"/><polyline fill="none" stroke="#d88070" stroke-width="1.4" opacity="0.7" stroke-linejoin="round" points="502,637 516,589"/><polyline fill="none" stroke="#e07060" stroke-width="1.4" opacity="0.7" stroke-linejoin="round" points="471,637 457,589"/><polyline fill="none" stroke="#d87060" stroke-width="1.4" opacity="0.6" stroke-linejoin="round" points="540,637 526,589"/><path d="M420,598 Q470,600 505,637" fill="none" stroke="#e05030" stroke-width="1.2" opacity="0.35"/><path d="M440,592 Q500,596 548,637" fill="none" stroke="#e05030" stroke-width="1.2" opacity="0.3"/><polyline fill="none" stroke="#c4c4c4" stroke-width="2.4" opacity="0.92" stroke-linejoin="round" points="627,637 641,543.7 752.5,543.7 767,637"/><polyline fill="none" stroke="#c4c4c4" stroke-width="2" opacity="0.9" stroke-linejoin="round" points="641,557 752.5,557"/><polyline fill="none" stroke="#c4c4c4" stroke-width="2.6" opacity="0.85" stroke-linejoin="round" points="641,576.5 752.5,576.5"/><polyline fill="none" stroke="#c4c4c4" stroke-width="2" opacity="0.8" stroke-linejoin="round" points="641,581.5 752.5,581.5"/><polyline fill="none" stroke="#c0c0c0" stroke-width="3.5" opacity="0.9" stroke-linejoin="round" points="600,589 752.5,589"/><polyline fill="none" stroke="#c4c4c4" stroke-width="2" opacity="0.85" stroke-linejoin="round" points="558,637 572,567.5 614,567.5 628,637"/><polyline fill="none" stroke="#c4c4c4" stroke-width="2" opacity="0.85" stroke-linejoin="round" points="555,567.5 683,567.5 697,637"/><polyline fill="none" stroke="#c4c4c4" stroke-width="2" opacity="0.8" stroke-linejoin="round" points="555,579 685,579"/><polyline fill="none" stroke="#b8b8d0" stroke-width="1.6" opacity="0.6" stroke-linejoin="round" points="488,637 502,579 558,579"/><polyline fill="none" stroke="#c0c0e0" stroke-width="1.4" opacity="0.6" stroke-linejoin="round" points="698,637 684,589"/><polyline fill="none" stroke="#c0c0e0" stroke-width="1.4" opacity="0.6" stroke-linejoin="round" points="752,589 766,637"/><polyline fill="none" stroke="#c0c0e0" stroke-width="1.2" opacity="0.5" stroke-linejoin="round" points="721,637 707,589"/><polyline fill="none" stroke="#c0c0e0" stroke-width="1.2" opacity="0.5" stroke-linejoin="round" points="580,637 594,589"/><line x1="258" y1="585.7" x2="802" y2="585.7" stroke="#888" stroke-width="1.2" stroke-dasharray="8 6" opacity="0.8"/><line x1="257.5" y1="503" x2="257.5" y2="638" stroke="#bbb" stroke-width="1"/><line x1="257" y1="638" x2="803" y2="638" stroke="#bbb" stroke-width="1"/><line x1="255" y1="517.2" x2="258" y2="517.2" stroke="#bbb"/><text x="254" y="520.7" text-anchor="end" font-family="Liberation Mono" font-size="11.5" fill="#c0c0c0">-30</text><line x1="255" y1="534.6" x2="258" y2="534.6" stroke="#bbb"/><text x="254" y="538.1" text-anchor="end" font-family="Liberation Mono" font-size="11.5" fill="#c0c0c0">-40</text><line x1="255" y1="551.9" x2="258" y2="551.9" stroke="#bbb"/><text x="254" y="555.4" text-anchor="end" font-family="Liberation Mono" font-size="11.5" fill="#c0c0c0">-50</text><line x1="255" y1="569.3" x2="258" y2="569.3" stroke="#bbb"/><text x="254" y="572.8" text-anchor="end" font-family="Liberation Mono" font-size="11.5" fill="#c0c0c0">-60</text><line x1="255" y1="586.6" x2="258" y2="586.6" stroke="#bbb"/><text x="254" y="590.1" text-anchor="end" font-family="Liberation Mono" font-size="11.5" fill="#c0c0c0">-70</text><line x1="255" y1="604.0" x2="258" y2="604.0" stroke="#bbb"/><text x="254" y="607.5" text-anchor="end" font-family="Liberation Mono" font-size="11.5" fill="#c0c0c0">-80</text><line x1="255" y1="621.4" x2="258" y2="621.4" stroke="#bbb"/><text x="254" y="624.9" text-anchor="end" font-family="Liberation Mono" font-size="11.5" fill="#c0c0c0">-90</text><line x1="349.0" y1="637" x2="349.0" y2="640" stroke="#bbb"/><text x="349.0" y="652.5" text-anchor="middle" font-family="Liberation Mono" font-weight="bold" font-size="12" fill="#3a98e0">1</text><line x1="383.9" y1="637" x2="383.9" y2="640" stroke="#bbb"/><text x="383.9" y="652.5" text-anchor="middle" font-family="Liberation Mono" font-weight="bold" font-size="12" fill="#e05828">2</text><line x1="418.9" y1="637" x2="418.9" y2="640" stroke="#bbb"/><text x="418.9" y="652.5" text-anchor="middle" font-family="Liberation Mono" font-weight="bold" font-size="12" fill="#e05828">3</text><line x1="453.8" y1="637" x2="453.8" y2="640" stroke="#bbb"/><text x="453.8" y="652.5" text-anchor="middle" font-family="Liberation Mono" font-weight="bold" font-size="12" fill="#e05828">4</text><line x1="488.7" y1="637" x2="488.7" y2="640" stroke="#bbb"/><text x="488.7" y="652.5" text-anchor="middle" font-family="Liberation Mono" font-weight="bold" font-size="12" fill="#dddddd">5</text><line x1="523.6" y1="637" x2="523.6" y2="640" stroke="#bbb"/><text x="523.6" y="652.5" text-anchor="middle" font-family="Liberation Mono" font-weight="bold" font-size="12" fill="#dddddd">6</text><line x1="558.6" y1="637" x2="558.6" y2="640" stroke="#bbb"/><text x="558.6" y="652.5" text-anchor="middle" font-family="Liberation Mono" font-weight="bold" font-size="12" fill="#dddddd">7</text><line x1="593.5" y1="637" x2="593.5" y2="640" stroke="#bbb"/><text x="593.5" y="652.5" text-anchor="middle" font-family="Liberation Mono" font-weight="bold" font-size="12" fill="#dddddd">8</text><line x1="628.4" y1="637" x2="628.4" y2="640" stroke="#bbb"/><text x="628.4" y="652.5" text-anchor="middle" font-family="Liberation Mono" font-weight="bold" font-size="12" fill="#dddddd">9</text><line x1="663.4" y1="637" x2="663.4" y2="640" stroke="#bbb"/><text x="663.4" y="652.5" text-anchor="middle" font-family="Liberation Mono" font-weight="bold" font-size="12" fill="#dddddd">10</text><line x1="698.3" y1="637" x2="698.3" y2="640" stroke="#bbb"/><text x="698.3" y="652.5" text-anchor="middle" font-family="Liberation Mono" font-weight="bold" font-size="12" fill="#dddddd">11</text><rect x="306" y="519.5" width="90" height="15.0" fill="#000" stroke="#2a78b8" stroke-width="1.3"/><text x="351.0" y="530.5" text-anchor="middle" font-family="Liberation Mono" font-weight="bold" font-size="10" letter-spacing="1.2" fill="#3aa0e0">The Network</text><rect x="331" y="539" width="38.5" height="15" fill="#101004" stroke="#909030" stroke-width="1.3"/><text x="350.25" y="550" text-anchor="middle" font-family="Liberation Mono" font-weight="bold" font-size="10" letter-spacing="1.2" fill="#c8c858">ACCO</text><rect x="420" y="549" width="68" height="15" fill="#2a0c04" stroke="#a84018" stroke-width="1.3"/><text x="454.0" y="560" text-anchor="middle" font-family="Liberation Mono" font-weight="bold" font-size="10" letter-spacing="1.2" fill="#d85a28">ISRguest</text><rect x="428" y="563.5" width="52" height="13.5" fill="#2a0c04" stroke="#a84018" stroke-width="1.3"/><text x="454.0" y="573" text-anchor="middle" font-family="Liberation Mono" font-weight="bold" font-size="10" letter-spacing="1.2" fill="#d85a28">QA-DLN</text><rect x="498.5" y="562.5" width="51.0" height="14.0" fill="#2a0c04" stroke="#a84018" stroke-width="1.3"/><text x="524.0" y="572.5" text-anchor="middle" font-family="Liberation Mono" font-weight="bold" font-size="10" letter-spacing="1.2" fill="#d85a28">Osiris</text><polyline fill="none" stroke="#3ea8f0" stroke-width="3" stroke-linejoin="round" points="280.5,636 294,542.8 407,542.8 418.5,636"/></svg>
<svg class="a" style="left:813px;top:493px" width="579" height="169" viewBox="813 493 579 169"><line x1="815" y1="586.5" x2="1360" y2="586.5" stroke="#888" stroke-width="1.3" stroke-dasharray="8 6"/><line x1="815" y1="639" x2="1361" y2="639" stroke="#bbb" stroke-width="1"/><line x1="1360.5" y1="503" x2="1360.5" y2="639" stroke="#bbb" stroke-width="1"/><line x1="1360" y1="517.2" x2="1364" y2="517.2" stroke="#bbb"/><text x="1364" y="520.7" font-family="Liberation Mono" font-size="11.5" fill="#c0c0c0">-30</text><line x1="1360" y1="534.6" x2="1364" y2="534.6" stroke="#bbb"/><text x="1364" y="538.1" font-family="Liberation Mono" font-size="11.5" fill="#c0c0c0">-40</text><line x1="1360" y1="551.9" x2="1364" y2="551.9" stroke="#bbb"/><text x="1364" y="555.4" font-family="Liberation Mono" font-size="11.5" fill="#c0c0c0">-50</text><line x1="1360" y1="569.3" x2="1364" y2="569.3" stroke="#bbb"/><text x="1364" y="572.8" font-family="Liberation Mono" font-size="11.5" fill="#c0c0c0">-60</text><line x1="1360" y1="586.6" x2="1364" y2="586.6" stroke="#bbb"/><text x="1364" y="590.1" font-family="Liberation Mono" font-size="11.5" fill="#c0c0c0">-70</text><line x1="1360" y1="604.0" x2="1364" y2="604.0" stroke="#bbb"/><text x="1364" y="607.5" font-family="Liberation Mono" font-size="11.5" fill="#c0c0c0">-80</text><line x1="1360" y1="621.4" x2="1364" y2="621.4" stroke="#bbb"/><text x="1364" y="624.9" font-family="Liberation Mono" font-size="11.5" fill="#c0c0c0">-90</text><text x="831.2" y="652.5" text-anchor="middle" font-family="Liberation Mono" font-weight="bold" font-size="12" fill="#ddd">36</text><text x="863" y="652.5" text-anchor="middle" font-family="Liberation Mono" font-weight="bold" font-size="12" fill="#ddd">44</text><text x="895.3" y="652.5" text-anchor="middle" font-family="Liberation Mono" font-weight="bold" font-size="12" fill="#ddd">52</text><text x="927.8" y="652.5" text-anchor="middle" font-family="Liberation Mono" font-weight="bold" font-size="12" fill="#ddd">60</text><text x="1087.5" y="652.5" text-anchor="middle" font-family="Liberation Mono" font-weight="bold" font-size="12" fill="#ddd">100</text><text x="1120" y="652.5" text-anchor="middle" font-family="Liberation Mono" font-weight="bold" font-size="12" fill="#ddd">108</text><text x="1152.4" y="652.5" text-anchor="middle" font-family="Liberation Mono" font-weight="bold" font-size="12" fill="#ddd">116</text><text x="1216.3" y="652.5" text-anchor="middle" font-family="Liberation Mono" font-weight="bold" font-size="12" fill="#ddd">132</text><text x="1248.2" y="652.5" text-anchor="middle" font-family="Liberation Mono" font-weight="bold" font-size="12" fill="#ddd">140</text><text x="1284.5" y="652.5" text-anchor="middle" font-family="Liberation Mono" font-weight="bold" font-size="12" fill="#ddd">149</text><text x="1316.7" y="652.5" text-anchor="middle" font-family="Liberation Mono" font-weight="bold" font-size="12" fill="#ddd">157</text><text x="1349.2" y="652.5" text-anchor="middle" font-family="Liberation Mono" font-weight="bold" font-size="12" fill="#ddd">165</text><line x1="831" y1="637" x2="831" y2="640" stroke="#bbb"/><line x1="847" y1="637" x2="847" y2="640" stroke="#bbb"/><line x1="863" y1="637" x2="863" y2="640" stroke="#bbb"/><line x1="879" y1="637" x2="879" y2="640" stroke="#bbb"/><line x1="895" y1="637" x2="895" y2="640" stroke="#bbb"/><line x1="911" y1="637" x2="911" y2="640" stroke="#bbb"/><line x1="927" y1="637" x2="927" y2="640" stroke="#bbb"/><line x1="943" y1="637" x2="943" y2="640" stroke="#bbb"/><line x1="1087" y1="637" x2="1087" y2="640" stroke="#bbb"/><line x1="1103" y1="637" x2="1103" y2="640" stroke="#bbb"/><line x1="1120" y1="637" x2="1120" y2="640" stroke="#bbb"/><line x1="1136" y1="637" x2="1136" y2="640" stroke="#bbb"/><line x1="1152" y1="637" x2="1152" y2="640" stroke="#bbb"/><line x1="1216" y1="637" x2="1216" y2="640" stroke="#bbb"/><line x1="1232" y1="637" x2="1232" y2="640" stroke="#bbb"/><line x1="1248" y1="637" x2="1248" y2="640" stroke="#bbb"/><line x1="1264" y1="637" x2="1264" y2="640" stroke="#bbb"/><line x1="1284" y1="637" x2="1284" y2="640" stroke="#bbb"/><line x1="1300" y1="637" x2="1300" y2="640" stroke="#bbb"/><line x1="1316" y1="637" x2="1316" y2="640" stroke="#bbb"/><line x1="1332" y1="637" x2="1332" y2="640" stroke="#bbb"/><line x1="1349" y1="637" x2="1349" y2="640" stroke="#bbb"/><polyline fill="none" stroke="#bcbcbc" stroke-width="2" points="825.5,637 826.8,589 855,589 857.5,637"/><polyline fill="none" stroke="#bcbcbc" stroke-width="1.8" points="1276.3,637 1276.3,563.5 1339,563.5 1339,600"/><polyline fill="none" stroke="#bcbcbc" stroke-width="2" points="1274.5,637 1277.6,587 1290.4,587 1292,637"/><polyline fill="none" stroke="#bcbcbc" stroke-width="2" points="1306.5,637 1308.3,589 1322.3,589 1324.4,637"/><polyline fill="none" stroke="#bcbcbc" stroke-width="2" points="1322.8,637 1325.4,578 1337.7,578 1340.7,637"/></svg>
<div class="a" style="left:225px;top:662px;width:1167px;height:21px;background:linear-gradient(#dcdcdc,#d0d0d0);border-bottom:2px solid #94a4c0"></div>
<span class="a" style="left:230px;top:666px;font-size:10.5px;line-height:13px;color:#999">Wi-Fi Adapter:</span>
<span class="a" style="left:299px;top:666px;font-size:10px;line-height:13px;color:#383838;font-weight:bold">ASUS USB-AC56 802.11ac Wireless USB Adapter</span>
<span class="a" style="left:1286px;top:666px;font-size:10.5px;line-height:13px;color:#999">Wi-Spy:</span>
<span class="a" style="left:1325px;top:666px;font-size:10.5px;line-height:13px;color:#383838;font-weight:bold">Wi-Spy 2.4x2</span>
</body></html>
